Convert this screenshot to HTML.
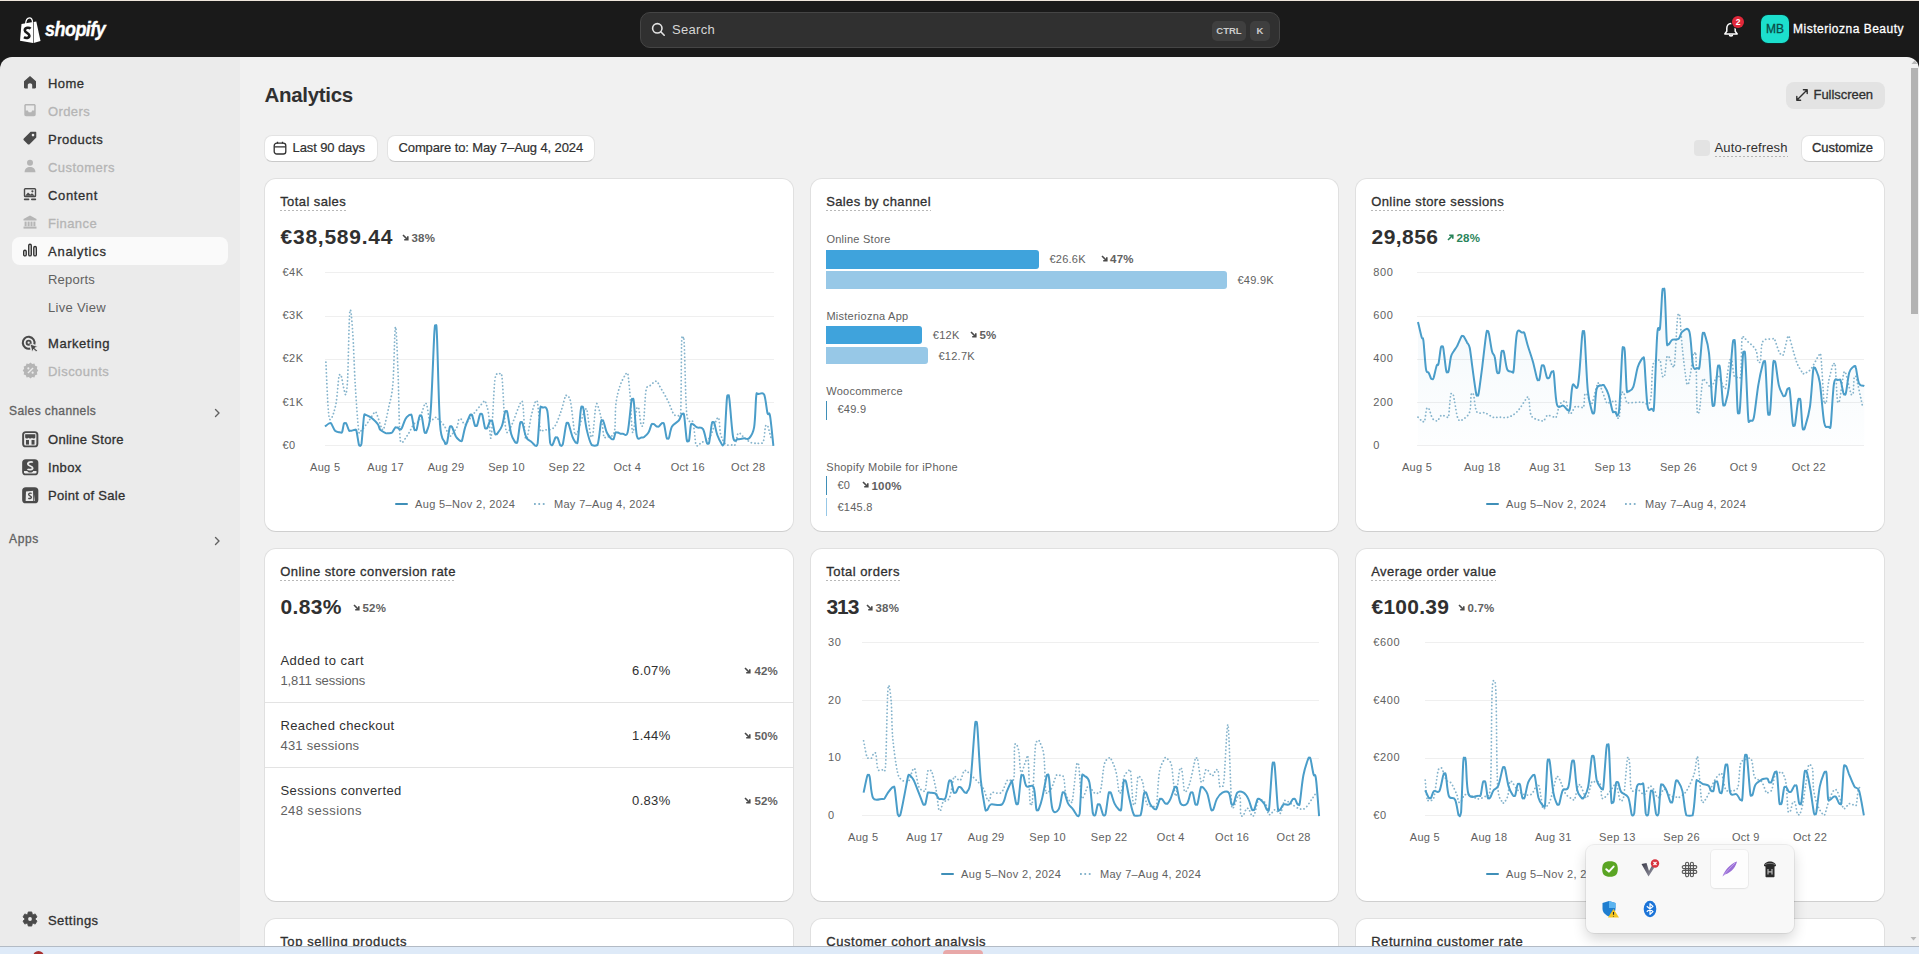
<!DOCTYPE html>
<html><head><meta charset="utf-8"><style>*{box-sizing:border-box;margin:0;padding:0}
html,body{width:1919px;height:954px;overflow:hidden;background:#1a1a1a;font-family:"Liberation Sans",sans-serif;color:#303030}
.abs{position:absolute}
.t{position:absolute;white-space:nowrap}
#top{position:absolute;left:0;top:0;width:1919px;height:57px;background:#1a1a1a;border-top:1px solid #efe6dc}
#side{position:absolute;left:0;top:57px;width:240px;height:897px;background:#ebebeb;border-top-left-radius:12px}
#main{position:absolute;left:240px;top:57px;width:1679px;height:897px;background:#f1f1f1;border-top-right-radius:12px}
.card{position:absolute;background:#fff;border-radius:12px;border:1px solid #e0e0e0;border-bottom-color:#cfcfcf}
.btn{position:absolute;background:#fff;border-radius:8px;border:1px solid #e3e3e3;border-bottom-color:#c9c9c9}
</style></head><body>
<div id="top">
<svg class="abs" style="left:19px;top:15px" width="24" height="28" viewBox="0 0 24 28">
  <path d="M2.5 8 L14 6 L14 27 L1 24.8 Z" fill="#fff"/>
  <path d="M14.6 5.9 L17.3 5.5 L21.5 25 L14.6 27 Z" fill="#fff"/>
  <path d="M6.5 8.5 C6.8 4,8.5 1.8,10.5 1.8 C12.2 1.8,13.4 3.5,13.6 6.5" stroke="#fff" stroke-width="1.3" fill="none"/>
  <path d="M11.6 12.6 C10.2 11.3,5.8 11.2,5.8 14.3 C5.8 17,10.4 16.8,10.4 19.8 C10.4 22.3,6.8 22.4,5 21.2" stroke="#1a1a1a" stroke-width="2.6" fill="none"/>
 </svg>
<div class="abs" style="left:44.5px;top:17.3px;font-size:20px;font-weight:700;font-style:italic;color:#fff;-webkit-text-stroke:0.4px #fff;letter-spacing:-0.6px;transform:scaleX(0.9);transform-origin:left;line-height:22px">shopify</div>
<div class="abs" style="left:640px;top:10.5px;width:640px;height:36px;background:#303030;border:1px solid #454545;border-radius:10px"></div>
<svg class="abs" style="left:651px;top:21px" width="15" height="15" viewBox="0 0 15 15"><circle cx="6.3" cy="6.3" r="4.7" stroke="#e3e3e3" stroke-width="1.6" fill="none"/><path d="M9.8 9.8 L13.2 13.2" stroke="#e3e3e3" stroke-width="1.6" stroke-linecap="round"/></svg>
<div class="t" style="top:22.00px;font-size:13px;font-weight:400;color:#d6d6d6;line-height:13px;letter-spacing:0.299px;left:672.00px;">Search</div>
<div class="abs" style="left:1212px;top:19.5px;width:34px;height:20px;background:#3f3f3f;border-radius:5px"></div>
<div class="t" style="top:25.16px;font-size:9.5px;font-weight:700;color:#cccccc;line-height:9.5px;left:1229.00px;transform:translateX(-50%);">CTRL</div>
<div class="abs" style="left:1250px;top:19.5px;width:20px;height:20px;background:#3f3f3f;border-radius:5px"></div>
<div class="t" style="top:25.16px;font-size:9.5px;font-weight:700;color:#cccccc;line-height:9.5px;left:1260.00px;transform:translateX(-50%);">K</div>
<svg class="abs" style="left:1723px;top:21px" width="16" height="17" viewBox="0 0 16 17"><path d="M8 1.5 C5.3 1.5,3.8 3.6,3.8 6.3 L3.8 9.2 L1.8 11.9 L14.2 11.9 L12.2 9.2 L12.2 6.3 C12.2 3.6,10.7 1.5,8 1.5 Z" stroke="#fff" stroke-width="1.5" fill="none" stroke-linejoin="round"/><path d="M6.4 12.6 C6.4 14.6,9.6 14.6,9.6 12.6" stroke="#fff" stroke-width="1.5" fill="none"/></svg>
<div class="abs" style="left:1732px;top:15px;width:12px;height:12px;border-radius:6px;background:#e0283a;box-shadow:0 0 0 1px #1a1a1a"></div>
<div class="t" style="top:17.30px;font-size:8.5px;font-weight:700;color:#fff;line-height:8.5px;left:1738.00px;transform:translateX(-50%);">2</div>
<div class="abs" style="left:1761px;top:13.8px;width:28px;height:28px;border-radius:7px;background:#1cdfcd;box-shadow:0 0 0 1px #0c2a28"></div>
<div class="t" style="top:22.14px;font-size:12px;font-weight:400;color:#0a4d47;line-height:12px;-webkit-text-stroke:0.3px #0a4d47;left:1775.00px;transform:translateX(-50%);">MB</div>
<div class="t" style="top:22.14px;font-size:12px;font-weight:400;color:#fff;line-height:12px;-webkit-text-stroke:0.3px #fff;letter-spacing:0.497px;left:1793.00px;">Misteriozna Beauty</div>
</div>
<div id="side"></div>
<div class="abs" style="left:12px;top:237px;width:216px;height:28px;background:#fafafa;border-radius:8px"></div>
<svg class="abs" style="left:22.0px;top:74.0px" width="16" height="16" viewBox="0 0 16 16"><path d="M2 7.2 L8 2 L14 7.2 L14 13.3 C14 14,13.6 14.4,13 14.4 L10.2 14.4 L10.2 11 C10.2 10,9.2 9.2,8 9.2 C6.8 9.2,5.8 10,5.8 11 L5.8 14.4 L3 14.4 C2.4 14.4,2 14,2 13.3 Z" fill="#4a4a4a"/></svg>
<div class="t" style="top:77.00px;font-size:13px;font-weight:400;color:#303030;line-height:13px;-webkit-text-stroke:0.3px #303030;letter-spacing:0.453px;left:48.00px;">Home</div>
<svg class="abs" style="left:22.0px;top:102.0px" width="16" height="16" viewBox="0 0 16 16"><path d="M2.3 3.6 C2.3 2.6,3 2,4 2 L12 2 C13 2,13.7 2.6,13.7 3.6 L13.7 12.6 C13.7 13.5,13 14.2,12 14.2 L4 14.2 C3 14.2,2.3 13.5,2.3 12.6 Z" fill="#b5b5b5"/><path d="M3.8 3.5 L12.2 3.5 L12.2 8.6 L10.2 8.6 L9.3 10.2 L6.7 10.2 L5.8 8.6 L3.8 8.6 Z" fill="#ebebeb"/></svg>
<div class="t" style="top:105.00px;font-size:13px;font-weight:400;color:#b5b5b5;line-height:13px;-webkit-text-stroke:0.3px #b5b5b5;letter-spacing:0.394px;left:48.00px;">Orders</div>
<svg class="abs" style="left:22.0px;top:130.0px" width="16" height="16" viewBox="0 0 16 16"><path d="M8.6 1.8 L13.3 1.8 C13.9 1.8,14.3 2.2,14.3 2.8 L14.3 7.5 L7.6 14.2 C7.1 14.7,6.3 14.7,5.8 14.2 L1.8 10.2 C1.3 9.7,1.3 8.9,1.8 8.4 Z" fill="#4a4a4a"/><circle cx="11" cy="5.1" r="1.3" fill="#ebebeb"/></svg>
<div class="t" style="top:133.00px;font-size:13px;font-weight:400;color:#303030;line-height:13px;-webkit-text-stroke:0.3px #303030;letter-spacing:0.498px;left:48.00px;">Products</div>
<svg class="abs" style="left:22.0px;top:158.0px" width="16" height="16" viewBox="0 0 16 16"><circle cx="8" cy="4.8" r="3" fill="#b5b5b5"/><path d="M2.6 14.2 C2.6 10.7,5 9,8 9 C11 9,13.4 10.7,13.4 14.2 Z" fill="#b5b5b5"/></svg>
<div class="t" style="top:161.00px;font-size:13px;font-weight:400;color:#b5b5b5;line-height:13px;-webkit-text-stroke:0.3px #b5b5b5;letter-spacing:0.460px;left:48.00px;">Customers</div>
<svg class="abs" style="left:22.0px;top:186.0px" width="16" height="16" viewBox="0 0 16 16"><rect x="1.8" y="2" width="12.4" height="9.2" rx="1.5" fill="#4a4a4a"/><rect x="3.2" y="3.4" width="9.6" height="6.4" fill="#ebebeb"/><path d="M3.2 9.8 L6 6.6 L8.4 8.6 L10 7.2 L12.8 9.8 Z" fill="#4a4a4a"/><circle cx="10.4" cy="5.3" r="1.1" fill="#4a4a4a"/><rect x="1.8" y="12.6" width="5.6" height="1.6" rx=".8" fill="#4a4a4a"/><rect x="9" y="12.6" width="5.2" height="1.6" rx=".8" fill="#4a4a4a"/></svg>
<div class="t" style="top:189.00px;font-size:13px;font-weight:400;color:#303030;line-height:13px;-webkit-text-stroke:0.3px #303030;letter-spacing:0.636px;left:48.00px;">Content</div>
<svg class="abs" style="left:22.0px;top:214.0px" width="16" height="16" viewBox="0 0 16 16"><path d="M8 1.5 L14.5 5 L14.5 6.6 L1.5 6.6 L1.5 5 Z" fill="#b5b5b5"/><rect x="2.6" y="7.6" width="2" height="4.6" fill="#b5b5b5"/><rect x="5.6" y="7.6" width="2" height="4.6" fill="#b5b5b5"/><rect x="8.5" y="7.6" width="2" height="4.6" fill="#b5b5b5"/><rect x="11.4" y="7.6" width="2" height="4.6" fill="#b5b5b5"/><rect x="1.5" y="12.6" width="13" height="2" fill="#b5b5b5"/></svg>
<div class="t" style="top:217.00px;font-size:13px;font-weight:400;color:#b5b5b5;line-height:13px;-webkit-text-stroke:0.3px #b5b5b5;letter-spacing:0.393px;left:48.00px;">Finance</div>
<svg class="abs" style="left:22.0px;top:242.0px" width="16" height="16" viewBox="0 0 16 16"><rect x="1.7" y="8.3" width="2.5" height="5.6" rx="1.25" stroke="#303030" stroke-width="1.4" fill="none"/><rect x="6.75" y="2.3" width="2.5" height="11.6" rx="1.25" stroke="#303030" stroke-width="1.4" fill="none"/><rect x="11.8" y="4.5" width="2.5" height="9.4" rx="1.25" stroke="#303030" stroke-width="1.4" fill="none"/></svg>
<div class="t" style="top:245.00px;font-size:13px;font-weight:400;color:#303030;line-height:13px;-webkit-text-stroke:0.3px #303030;letter-spacing:0.741px;left:48.00px;">Analytics</div>
<div class="t" style="top:273.00px;font-size:13px;font-weight:400;color:#616161;line-height:13px;letter-spacing:0.210px;left:48.00px;">Reports</div>
<div class="t" style="top:301.00px;font-size:13px;font-weight:400;color:#616161;line-height:13px;letter-spacing:0.288px;left:48.00px;">Live View</div>
<svg class="abs" style="left:21.2px;top:334.8px" width="17.5" height="17.5" viewBox="0 0 16 16"><path d="M12.2 8.6 A5.4 5.4 0 1 0 8.4 12.3" stroke="#4a4a4a" stroke-width="1.9" fill="none"/><circle cx="7" cy="7" r="1.9" stroke="#4a4a4a" stroke-width="1.7" fill="none"/><path d="M8.3 8.3 L15.3 10.6 L12.6 11.9 L15 14.3 L13.9 15.4 L11.5 13 L10.2 15.6 Z" fill="#4a4a4a" stroke="#ebebeb" stroke-width=".7" stroke-linejoin="round"/></svg>
<div class="t" style="top:337.00px;font-size:13px;font-weight:400;color:#303030;line-height:13px;-webkit-text-stroke:0.3px #303030;letter-spacing:0.547px;left:48.00px;">Marketing</div>
<svg class="abs" style="left:21.5px;top:361.5px" width="17" height="17" viewBox="0 0 16 16"><path d="M8 1 L9.6 2.4 L11.7 2 L12.4 4 L14.4 4.8 L14 6.9 L15.3 8.5 L14 10.1 L14.4 12.2 L12.4 13 L11.7 15 L9.6 14.6 L8 16 L6.4 14.6 L4.3 15 L3.6 13 L1.6 12.2 L2 10.1 L0.7 8.5 L2 6.9 L1.6 4.8 L3.6 4 L4.3 2 L6.4 2.4 Z" fill="#b5b5b5" transform="translate(0,-0.5)"/><path d="M5.6 10.4 L10.4 5.6" stroke="#ebebeb" stroke-width="1.3"/><circle cx="6" cy="6" r="1" fill="#ebebeb"/><circle cx="10" cy="10" r="1" fill="#ebebeb"/></svg>
<div class="t" style="top:365.00px;font-size:13px;font-weight:400;color:#b5b5b5;line-height:13px;-webkit-text-stroke:0.3px #b5b5b5;letter-spacing:0.458px;left:48.00px;">Discounts</div>
<div class="t" style="top:404.84px;font-size:12px;font-weight:400;color:#616161;line-height:12px;-webkit-text-stroke:0.3px #616161;letter-spacing:0.415px;left:9.00px;">Sales channels</div>
<svg class="abs" style="left:212px;top:407px" width="10" height="12" viewBox="0 0 10 12"><path d="M3.5 2.5 L7 6 L3.5 9.5" stroke="#616161" stroke-width="1.4" fill="none" stroke-linecap="round" stroke-linejoin="round"/></svg>
<svg class="abs" style="left:20.8px;top:429.8px" width="18.5" height="18.5" viewBox="0 0 16 16"><rect x="1" y="1" width="14" height="14" rx="3.2" fill="#4a4a4a"/><rect x="2.7" y="2.7" width="10.6" height="10.6" rx="1.3" fill="#ebebeb"/><path d="M3.6 3.6 L12.4 3.6 L12.4 6.2 C12.4 7,11.6 7.4,11 7.4 C10.3 7.4,9.5 7,9.5 6.4 C9.5 7,8.7 7.4,8 7.4 C7.3 7.4,6.5 7,6.5 6.4 C6.5 7,5.7 7.4,5 7.4 C4.3 7.4,3.6 7,3.6 6.2 Z" fill="#4a4a4a"/><rect x="4.3" y="8.6" width="2.6" height="4" fill="#4a4a4a"/><rect x="9.1" y="8.6" width="2.6" height="4" fill="#4a4a4a"/></svg>
<div class="t" style="top:433.00px;font-size:13px;font-weight:400;color:#303030;line-height:13px;-webkit-text-stroke:0.3px #303030;letter-spacing:0.295px;left:48.00px;">Online Store</div>
<svg class="abs" style="left:20.8px;top:457.8px" width="18.5" height="18.5" viewBox="0 0 16 16"><rect x="1" y="1" width="14" height="14" rx="3.2" fill="#4a4a4a"/><path d="M10.2 3.9 C9.4 3.1,5.9 3.2,5.9 5.2 C5.9 7,10.1 6.8,10.1 8.6 C10.1 10.3,6.6 10.4,5.6 9.6" stroke="#ebebeb" stroke-width="1.5" fill="none"/><path d="M2.6 11.2 L5.5 11.2 C5.8 12.2,6.8 12.6,8 12.6 C9.2 12.6,10.2 12.2,10.5 11.2 L13.4 11.2 L13.4 12.6 C13.4 13.1,13 13.4,12.5 13.4 L3.5 13.4 C3,13.4 2.6 13.1,2.6 12.6 Z" fill="#ebebeb"/></svg>
<div class="t" style="top:461.00px;font-size:13px;font-weight:400;color:#303030;line-height:13px;-webkit-text-stroke:0.3px #303030;letter-spacing:0.358px;left:48.00px;">Inbox</div>
<svg class="abs" style="left:20.8px;top:485.8px" width="18.5" height="18.5" viewBox="0 0 16 16"><rect x="1" y="1" width="14" height="14" rx="3.2" fill="#4a4a4a"/><path d="M4.3 4.8 L10.8 4 L12 13 L4 13 Z" fill="#ebebeb"/><path d="M9.2 6.5 C8.6 5.9,6.6 6,6.6 7.3 C6.6 8.6,9 8.4,9 9.8 C9 11,7.1 11.1,6.4 10.5" stroke="#4a4a4a" stroke-width="1.2" fill="none"/><path d="M10.8 4 L11 13" stroke="#4a4a4a" stroke-width="0.8"/></svg>
<div class="t" style="top:489.00px;font-size:13px;font-weight:400;color:#303030;line-height:13px;-webkit-text-stroke:0.3px #303030;letter-spacing:0.291px;left:48.00px;">Point of Sale</div>
<div class="t" style="top:532.84px;font-size:12px;font-weight:400;color:#616161;line-height:12px;-webkit-text-stroke:0.3px #616161;letter-spacing:0.635px;left:9.00px;">Apps</div>
<svg class="abs" style="left:212px;top:535px" width="10" height="12" viewBox="0 0 10 12"><path d="M3.5 2.5 L7 6 L3.5 9.5" stroke="#616161" stroke-width="1.4" fill="none" stroke-linecap="round" stroke-linejoin="round"/></svg>
<svg class="abs" style="left:22.0px;top:911.0px" width="16" height="16" viewBox="0 0 16 16"><path d="M5.80 3.07 L6.23 0.92 L9.77 0.92 L10.20 3.07 L11.17 3.63 L13.25 2.93 L15.02 5.99 L13.37 7.44 L13.37 8.56 L15.02 10.01 L13.25 13.07 L11.17 12.37 L10.20 12.93 L9.77 15.08 L6.23 15.08 L5.80 12.93 L4.83 12.37 L2.75 13.07 L0.98 10.01 L2.63 8.56 L2.63 7.44 L0.98 5.99 L2.75 2.93 L4.83 3.63 Z" fill="#4a4a4a" stroke="#4a4a4a" stroke-width="0.8" stroke-linejoin="round"/><circle cx="8" cy="8" r="1.9" fill="#ebebeb"/></svg>
<div class="t" style="top:914.00px;font-size:13px;font-weight:400;color:#303030;line-height:13px;-webkit-text-stroke:0.3px #303030;letter-spacing:0.439px;left:48.00px;">Settings</div>
<div id="main"></div>
<div class="t" style="top:84.85px;font-size:20.5px;font-weight:700;color:#303030;line-height:20.5px;letter-spacing:-0.317px;left:264.50px;">Analytics</div>
<div class="abs" style="left:1786px;top:81.5px;width:98.5px;height:27px;background:#e3e3e3;border-radius:8px"></div>
<svg class="abs" style="left:1795px;top:88px" width="14" height="14" viewBox="0 0 14 14"><path d="M8.4 1.8 L12.2 1.8 L12.2 5.6 M12 2 L2 12 M5.6 12.2 L1.8 12.2 L1.8 8.4" stroke="#303030" stroke-width="1.4" fill="none" stroke-linecap="round" stroke-linejoin="round"/></svg>
<div class="t" style="top:88.20px;font-size:13px;font-weight:400;color:#303030;line-height:13px;-webkit-text-stroke:0.3px #303030;letter-spacing:-0.047px;left:1813.50px;">Fullscreen</div>
<div class="btn" style="left:264px;top:134.5px;width:113.5px;height:27.5px"></div>
<svg class="abs" style="left:272.5px;top:140.5px" width="14" height="14" viewBox="0 0 14 14"><rect x="1.2" y="2.2" width="11.6" height="10.8" rx="2.6" stroke="#303030" stroke-width="1.3" fill="none"/><path d="M1.5 5.8 L12.5 5.8 M4.5 0.8 L4.5 2.6 M9.5 0.8 L9.5 2.6" stroke="#303030" stroke-width="1.3"/></svg>
<div class="t" style="top:141.00px;font-size:13px;font-weight:400;color:#303030;line-height:13px;letter-spacing:-0.102px;left:292.50px;-webkit-text-stroke:0.2px #303030;">Last 90 days</div>
<div class="btn" style="left:386.5px;top:134.5px;width:208px;height:27.5px"></div>
<div class="t" style="top:141.00px;font-size:13px;font-weight:400;color:#303030;line-height:13px;letter-spacing:-0.117px;left:398.50px;-webkit-text-stroke:0.2px #303030;">Compare to: May 7–Aug 4, 2024</div>
<div class="abs" style="left:1694px;top:140px;width:16px;height:16px;background:#e3e3e3;border-radius:4px"></div>
<div class="t" style="top:141.00px;font-size:13px;font-weight:400;color:#303030;line-height:13px;letter-spacing:0.121px;left:1714.50px;">Auto-refresh</div>
<div class="abs" style="left:1714.5px;top:155.5px;width:73px;height:1.5px;background-image:linear-gradient(to right,#b5b5b5 50%,transparent 50%);background-size:4px 1.5px"></div>
<div class="btn" style="left:1800.5px;top:134.5px;width:84.5px;height:27.5px"></div>
<div class="t" style="top:141.30px;font-size:13px;font-weight:400;color:#303030;line-height:13px;-webkit-text-stroke:0.3px #303030;letter-spacing:-0.047px;left:1812.00px;">Customize</div>
<div class="card" style="left:264px;top:178px;width:530px;height:354px"></div>
<div class="t" style="top:195.00px;font-size:13px;font-weight:400;color:#303030;line-height:13px;-webkit-text-stroke:0.3px #303030;letter-spacing:0.416px;left:280.20px;">Total sales</div>
<div class="abs" style="left:280.0px;top:209.5px;width:66px;height:1.5px;background-image:linear-gradient(to right,#b8b8b8 40%,transparent 40%);background-size:4px 1.5px"></div>
<div class="t" style="top:226.42px;font-size:21px;font-weight:700;color:#303030;line-height:21px;letter-spacing:0.759px;left:280.50px;">€38,589.44</div>
<svg class="abs" style="left:402.0px;top:233.7px" width="7" height="7" viewBox="0 0 7 7"><path d="M1 1 L5.6 5.6 M5.8 2.2 L5.8 5.8 L2.2 5.8" stroke="#4a4a4a" stroke-width="1.6" fill="none"/></svg>
<div class="t" style="top:233.17px;font-size:11.5px;font-weight:700;color:#616161;line-height:11.5px;letter-spacing:0.200px;left:411.50px;">38%</div>
<div class="abs" style="left:325.0px;top:272.0px;width:449.0px;height:1px;background:#efefef"></div>
<div class="t" style="top:266.59px;font-size:11px;font-weight:400;color:#616161;line-height:11px;letter-spacing:0.600px;left:282.40px;">€4K</div>
<div class="abs" style="left:325.0px;top:315.5px;width:449.0px;height:1px;background:#efefef"></div>
<div class="t" style="top:310.09px;font-size:11px;font-weight:400;color:#616161;line-height:11px;letter-spacing:0.600px;left:282.40px;">€3K</div>
<div class="abs" style="left:325.0px;top:358.8px;width:449.0px;height:1px;background:#efefef"></div>
<div class="t" style="top:353.39px;font-size:11px;font-weight:400;color:#616161;line-height:11px;letter-spacing:0.600px;left:282.40px;">€2K</div>
<div class="abs" style="left:325.0px;top:402.1px;width:449.0px;height:1px;background:#efefef"></div>
<div class="t" style="top:396.69px;font-size:11px;font-weight:400;color:#616161;line-height:11px;letter-spacing:0.600px;left:282.40px;">€1K</div>
<div class="abs" style="left:325.0px;top:445.3px;width:449.0px;height:1px;background:#efefef"></div>
<div class="t" style="top:439.89px;font-size:11px;font-weight:400;color:#616161;line-height:11px;letter-spacing:0.600px;left:282.40px;">€0</div>
<div class="t" style="top:461.69px;font-size:11px;font-weight:400;color:#616161;line-height:11px;letter-spacing:0.300px;left:325.20px;transform:translateX(-50%);">Aug 5</div>
<div class="t" style="top:461.69px;font-size:11px;font-weight:400;color:#616161;line-height:11px;letter-spacing:0.300px;left:385.63px;transform:translateX(-50%);">Aug 17</div>
<div class="t" style="top:461.69px;font-size:11px;font-weight:400;color:#616161;line-height:11px;letter-spacing:0.300px;left:446.06px;transform:translateX(-50%);">Aug 29</div>
<div class="t" style="top:461.69px;font-size:11px;font-weight:400;color:#616161;line-height:11px;letter-spacing:0.300px;left:506.50px;transform:translateX(-50%);">Sep 10</div>
<div class="t" style="top:461.69px;font-size:11px;font-weight:400;color:#616161;line-height:11px;letter-spacing:0.300px;left:566.93px;transform:translateX(-50%);">Sep 22</div>
<div class="t" style="top:461.69px;font-size:11px;font-weight:400;color:#616161;line-height:11px;letter-spacing:0.300px;left:627.36px;transform:translateX(-50%);">Oct 4</div>
<div class="t" style="top:461.69px;font-size:11px;font-weight:400;color:#616161;line-height:11px;letter-spacing:0.300px;left:687.79px;transform:translateX(-50%);">Oct 16</div>
<div class="t" style="top:461.69px;font-size:11px;font-weight:400;color:#616161;line-height:11px;letter-spacing:0.300px;left:748.22px;transform:translateX(-50%);">Oct 28</div>
<svg class="abs" style="left:0;top:0" width="1919" height="954" viewBox="0 0 1919 954"><path d="M325.9 362.1 C326.3 370.2 327.5 401.2 328.4 410.7 C329.2 420.2 329.6 420.2 330.9 419.0 C332.2 417.9 334.6 410.9 335.9 404.0 C337.2 397.0 338.1 382.2 338.8 377.5 C339.5 372.7 339.7 375.6 340.1 375.5 C340.5 375.3 340.7 374.0 341.4 376.5 C342.1 379.0 343.5 387.7 344.3 390.6 C345.1 393.4 345.4 396.1 346.0 393.9 C346.5 391.7 347.0 390.8 347.7 377.1 C348.3 363.5 349.0 319.3 349.8 311.8 C350.7 304.2 351.8 319.9 352.7 331.9 C353.6 343.9 354.2 367.6 355.2 383.8 C356.2 400.0 357.6 421.3 358.5 429.1 C359.5 436.9 359.5 431.9 361.1 430.8 C362.6 429.7 365.6 425.3 367.8 422.4 C369.9 419.4 372.7 414.7 374.0 413.0 C375.3 411.4 374.9 412.3 375.3 412.3 C375.7 412.4 375.6 410.9 376.6 413.5 C377.6 416.1 380.5 425.3 381.5 427.9 C382.6 430.5 382.4 429.2 382.8 429.1 C383.3 429.0 383.2 431.2 384.1 427.6 C385.1 423.9 387.3 414.6 388.7 407.3 C390.2 400.0 391.8 397.3 392.9 383.8 C394.0 370.4 394.6 329.4 395.4 326.9 C396.3 324.4 397.1 349.8 397.9 368.8 C398.8 387.8 398.9 429.7 400.4 440.8 C402.0 445.8 404.9 438.6 407.1 435.8 C409.4 433.0 411.9 426.6 413.8 424.1 C415.8 421.6 417.1 423.9 418.9 420.7 C420.6 417.6 423.2 407.9 424.3 405.1 C425.4 402.3 425.1 404.0 425.6 404.0 C426.0 404.0 426.3 402.5 426.9 405.1 C427.5 407.7 428.7 416.9 429.3 419.5 C429.9 422.1 430.2 420.6 430.6 420.7 C431.0 420.9 431.3 421.0 431.9 420.5 C432.5 420.0 433.7 418.1 434.3 417.6 C435.0 417.1 435.2 417.3 435.6 417.4 C436.1 417.4 435.5 416.6 436.9 418.0 C438.4 419.4 442.2 422.9 444.2 425.7 C446.2 428.6 447.8 433.4 448.8 435.1 C449.7 436.8 449.6 435.8 450.1 435.8 C450.5 435.8 450.2 436.6 451.4 435.2 C452.5 433.8 455.5 430.0 456.8 427.4 C458.0 424.8 458.3 421.0 458.8 419.6 C459.4 418.2 459.7 419.1 460.1 419.0 C460.5 419.0 460.8 418.6 461.4 419.4 C462.0 420.2 463.2 422.9 463.8 423.7 C464.5 424.5 464.7 424.1 465.1 424.1 C465.6 424.0 465.0 425.0 466.4 423.4 C467.8 421.7 470.7 417.5 473.5 414.0 C476.3 410.5 481.3 404.4 483.1 402.3 C484.9 400.2 484.0 401.4 484.4 401.4 C484.8 401.4 485.0 400.2 485.7 402.3 C486.4 404.4 487.7 408.2 488.6 414.0 C489.5 419.9 490.1 442.5 491.1 437.5 C492.1 432.5 493.6 394.3 494.5 383.8 C495.4 373.4 496.0 376.2 496.5 374.5 C497.1 372.8 497.4 373.9 497.8 373.8 C498.3 373.7 498.4 373.5 499.1 374.0 C499.8 374.6 501.1 369.9 502.0 377.1 C502.9 384.4 503.7 408.1 504.5 417.4 C505.4 426.6 505.8 431.3 507.0 432.5 C508.3 433.6 509.8 429.0 512.1 424.1 C514.3 419.2 518.6 406.2 520.4 403.1 C522.3 400.0 522.2 400.3 523.0 405.6 C523.7 411.0 524.4 429.9 525.0 435.2 C525.6 440.6 525.9 437.4 526.3 437.5 C526.7 437.6 526.8 439.6 527.6 436.0 C528.4 432.3 530.1 421.3 531.3 415.7 C532.6 410.1 534.2 404.8 535.1 402.4 C535.9 400.1 535.9 401.3 536.4 401.4 C536.8 401.6 537.0 399.0 537.7 403.5 C538.3 408.0 539.5 424.2 540.1 428.7 C540.7 433.3 541.0 430.4 541.4 430.8 C541.8 431.1 542.0 430.9 542.7 430.7 C543.4 430.6 543.7 430.5 545.6 429.9 C547.5 429.4 551.4 430.4 554.0 427.4 C556.5 424.5 558.8 417.5 560.7 412.3 C562.5 407.2 564.3 399.5 565.2 396.8 C566.2 394.0 566.1 395.7 566.5 395.6 C567.0 395.5 567.1 394.9 567.8 396.0 C568.5 397.2 569.6 396.3 570.7 402.3 C571.8 408.3 573.6 426.6 574.4 431.9 C575.3 437.2 575.3 433.8 575.7 434.1 C576.2 434.4 576.5 434.8 577.0 433.7 C577.6 432.5 577.9 431.3 579.1 427.4 C580.3 423.5 583.4 413.4 584.5 410.3 C585.6 407.2 585.4 408.9 585.8 409.0 C586.2 409.1 586.3 406.7 587.1 410.9 C587.9 415.0 589.6 429.8 590.4 433.9 C591.1 438.1 591.2 435.8 591.7 435.8 C592.1 435.8 592.3 438.7 593.0 433.7 C593.7 428.7 595.0 410.0 595.9 405.6 C596.8 401.2 597.4 404.8 598.4 407.3 C599.3 409.8 600.8 415.9 601.7 420.7 C602.6 425.6 603.2 433.5 603.8 436.3 C604.3 439.1 604.6 437.3 605.1 437.5 C605.5 437.6 604.9 438.0 606.4 437.1 C607.9 436.3 612.6 438.0 614.2 432.5 C615.8 426.9 614.9 411.8 615.9 404.0 C616.8 396.1 618.5 390.4 620.1 385.5 C621.7 380.6 624.3 376.6 625.5 374.6 C626.6 372.7 626.3 373.7 626.8 373.8 C627.2 373.9 627.5 371.7 628.1 375.3 C628.6 379.0 629.3 386.1 630.1 395.6 C630.9 405.1 631.6 430.1 632.6 432.5 C633.7 434.8 635.5 413.9 636.4 409.9 C637.2 405.8 637.2 408.2 637.7 408.1 C638.1 408.1 638.4 406.6 639.0 409.3 C639.5 411.9 640.2 421.9 641.0 424.1 C641.8 426.3 642.7 428.0 643.5 422.4 C644.4 416.8 644.9 396.7 646.0 390.6 C647.1 384.4 648.8 387.0 650.2 385.5 C651.7 384.0 653.8 382.3 654.8 381.6 C655.8 380.9 655.7 381.3 656.1 381.3 C656.5 381.4 656.7 380.8 657.4 381.7 C658.1 382.7 658.5 384.1 660.3 387.2 C662.0 390.3 665.6 396.1 667.8 400.6 C670.1 405.1 671.9 411.5 673.7 414.0 C675.4 416.5 677.3 415.3 678.2 415.6 C679.2 415.9 679.1 416.6 679.5 415.7 C680.0 414.8 680.5 422.2 680.8 410.3 C681.2 398.3 681.3 355.9 681.6 344.0 C681.9 332.0 682.5 338.7 682.9 338.6 C683.3 338.5 683.6 332.0 684.2 343.4 C684.8 354.9 685.5 394.4 686.3 407.3 C687.0 420.2 687.6 418.2 688.8 420.7 C689.9 423.2 691.8 418.5 693.0 422.4 C694.1 426.3 695.1 440.3 695.8 444.2 C696.5 445.8 696.7 445.6 697.1 445.9 C697.6 445.8 697.7 445.8 698.4 445.6 C699.1 445.1 700.0 443.3 701.3 442.5 C702.7 441.7 704.8 441.9 706.4 440.8 C707.9 439.7 708.6 439.7 710.6 435.8 C712.5 431.9 716.4 417.6 718.1 417.4 C719.8 417.1 719.4 429.7 720.6 434.1 C721.9 438.6 723.6 442.4 725.6 444.2 C727.7 445.8 731.3 444.8 732.7 445.0 C734.1 445.1 733.6 445.1 734.0 445.0 C734.4 444.9 734.7 445.8 735.3 444.2 C735.9 442.4 737.1 435.9 737.7 434.1 C738.4 432.3 738.6 433.4 739.0 433.3 C739.5 433.2 739.5 432.9 740.3 433.6 C741.2 434.3 742.3 436.0 744.1 437.5 C745.8 439.0 748.8 441.5 750.8 442.5 C752.8 443.5 755.1 443.1 756.2 443.3 C757.3 443.4 757.0 443.4 757.5 443.3 C757.9 443.3 757.8 443.5 758.8 443.2 C759.8 442.9 762.2 444.4 763.3 441.7 C764.4 438.9 764.8 429.5 765.4 426.9 C766.0 424.2 766.3 425.8 766.7 425.7 C767.1 425.7 767.3 424.6 768.0 426.6 C768.7 428.5 770.4 435.7 770.9 437.5" stroke="#86b4cc" stroke-width="1.8" fill="none" stroke-dasharray="0.1 3.5" stroke-linecap="round"/><path d="M325.0 426.6 C325.6 426.1 327.9 424.0 328.8 423.5 C329.6 422.9 329.6 423.2 330.1 423.2 C330.5 423.3 330.5 422.5 331.4 423.8 C332.2 425.0 333.7 429.3 335.1 430.8 C336.5 432.2 338.7 432.1 339.6 432.3 C340.6 432.6 340.5 432.5 340.9 432.5 C341.4 432.4 341.8 433.2 342.2 431.8 C342.7 430.4 343.4 425.3 343.8 423.9 C344.3 422.4 344.7 423.3 345.1 423.2 C345.6 423.2 345.8 422.6 346.4 423.8 C347.1 424.9 348.2 429.1 348.9 430.2 C349.5 431.4 349.7 430.7 350.2 430.8 C350.6 430.9 350.8 430.8 351.5 430.7 C352.1 430.6 353.3 430.1 353.9 430.0 C354.5 429.9 354.8 429.8 355.2 429.9 C355.6 430.1 355.9 428.6 356.5 431.1 C357.1 433.5 358.3 442.3 358.9 444.7 C359.5 445.8 359.8 445.8 360.2 445.9 C360.7 445.7 360.9 445.8 361.5 443.7 C362.1 438.9 363.3 421.8 363.9 417.0 C364.6 412.2 364.8 415.2 365.2 414.9 C365.7 414.5 365.4 414.5 366.5 415.1 C367.7 415.6 370.1 416.7 372.0 418.2 C373.8 419.7 376.4 422.1 377.8 424.1 C379.2 426.0 379.0 428.4 380.3 429.9 C381.7 431.4 384.6 432.5 385.7 433.1 C386.9 433.6 386.6 433.3 387.0 433.3 C387.5 433.3 387.5 433.4 388.3 433.2 C389.2 433.1 391.0 433.4 392.1 432.5 C393.2 431.5 394.3 428.6 395.0 427.8 C395.7 426.9 395.8 427.5 396.3 427.4 C396.7 427.4 397.1 427.3 397.6 427.5 C398.0 427.8 398.7 428.7 399.1 429.0 C399.6 429.2 400.0 429.2 400.4 429.1 C400.9 429.0 400.9 430.1 401.7 428.4 C402.6 426.7 404.2 421.3 405.5 419.0 C406.7 416.8 408.4 415.8 409.2 415.1 C410.0 414.4 410.1 414.7 410.5 414.9 C410.9 415.0 411.2 413.6 411.8 415.9 C412.4 418.2 413.6 426.5 414.2 428.9 C414.8 431.2 415.1 429.9 415.5 429.9 C416.0 429.9 416.2 431.1 416.8 428.9 C417.4 426.7 418.6 418.9 419.3 416.7 C419.9 414.5 420.1 415.7 420.6 415.7 C421.0 415.7 421.2 414.3 421.9 416.9 C422.5 419.5 423.7 428.7 424.3 431.3 C424.9 433.9 425.1 432.5 425.6 432.5 C426.0 432.4 426.0 434.4 426.9 431.0 C427.7 427.7 429.4 428.6 430.6 412.3 C431.9 396.1 433.5 347.7 434.3 333.6 C435.2 319.5 435.2 327.6 435.6 327.7 C436.1 327.8 436.2 318.4 436.9 334.5 C437.7 350.5 438.7 406.1 440.0 424.1 C441.3 442.0 443.6 438.8 444.6 442.0 C445.5 445.2 445.4 443.3 445.9 443.3 C446.3 443.4 446.5 444.8 447.2 442.2 C447.8 439.6 449.0 430.4 449.6 427.8 C450.2 425.2 450.5 426.7 450.9 426.6 C451.3 426.5 451.4 425.6 452.2 427.3 C453.0 429.0 454.7 434.4 455.9 436.6 C457.2 438.8 458.8 439.8 459.6 440.5 C460.5 441.2 460.5 440.9 460.9 440.8 C461.4 440.7 461.6 442.1 462.2 439.9 C462.9 437.7 463.9 431.4 465.1 427.4 C466.4 423.4 468.7 417.8 469.7 415.7 C470.7 413.6 470.6 414.9 471.0 414.9 C471.4 414.8 471.7 413.9 472.3 415.6 C472.9 417.3 474.1 423.3 474.7 425.0 C475.4 426.7 475.6 425.8 476.0 425.7 C476.5 425.7 476.7 426.7 477.3 424.9 C478.0 423.1 479.1 416.7 479.8 414.8 C480.4 413.0 480.6 414.0 481.1 414.0 C481.5 414.0 481.7 412.8 482.4 415.0 C483.0 417.2 484.2 425.1 484.8 427.3 C485.4 429.5 485.7 428.2 486.1 428.3 C486.5 428.3 486.8 428.9 487.4 427.7 C488.0 426.6 489.2 422.4 489.8 421.2 C490.4 420.1 490.7 420.7 491.1 420.7 C491.5 420.8 491.8 419.6 492.4 421.7 C493.0 423.7 494.2 431.1 494.8 433.2 C495.5 435.3 495.7 434.1 496.1 434.1 C496.6 434.2 496.5 434.9 497.4 433.5 C498.4 432.1 500.8 429.3 502.0 425.7 C503.3 422.2 504.2 414.9 504.9 412.5 C505.6 410.1 505.8 411.4 506.2 411.5 C506.6 411.6 506.7 409.3 507.5 413.1 C508.3 416.9 510.0 429.3 511.2 434.1 C512.5 438.9 514.1 440.5 515.0 441.9 C515.8 443.3 515.8 442.6 516.3 442.5 C516.7 442.4 516.9 444.2 517.6 441.1 C518.2 438.0 519.4 426.9 520.0 423.8 C520.6 420.7 520.8 422.5 521.3 422.4 C521.7 422.3 521.7 420.9 522.6 423.5 C523.4 426.0 524.8 434.4 526.3 437.5 C527.8 440.5 529.9 440.3 531.3 441.7 C532.8 443.0 534.2 444.9 535.1 445.6 C535.9 445.8 535.9 445.8 536.4 445.9 C536.8 445.5 537.0 445.8 537.7 443.2 C538.3 437.2 539.5 416.0 540.1 410.0 C540.7 404.0 541.0 407.7 541.4 407.3 C541.8 406.9 541.7 407.0 542.7 407.5 C543.7 408.1 546.0 404.8 547.3 410.7 C548.5 416.5 549.4 436.9 550.1 442.6 C550.8 445.8 551.0 444.7 551.4 445.0 C551.9 445.3 552.1 445.7 552.7 444.5 C553.4 443.3 554.6 439.2 555.2 438.0 C555.8 436.8 556.0 437.5 556.5 437.5 C556.9 437.5 557.2 436.8 557.8 438.1 C558.4 439.4 559.6 444.0 560.2 445.3 C560.8 445.8 561.1 445.8 561.5 445.9 C561.9 445.7 562.0 445.8 562.8 444.3 C563.6 440.8 565.3 428.3 566.1 424.8 C566.8 421.3 566.9 423.3 567.4 423.2 C567.8 423.1 567.8 421.9 568.7 424.2 C569.5 426.4 571.3 433.7 572.4 436.6 C573.5 439.6 574.6 441.1 575.3 442.1 C576.0 443.1 576.2 442.8 576.6 442.5 C577.0 442.2 577.2 445.5 577.9 440.0 C578.6 434.6 580.1 415.2 580.8 409.8 C581.5 404.3 581.7 407.5 582.1 407.3 C582.5 407.2 582.7 405.2 583.4 408.8 C584.2 412.5 585.3 423.1 586.6 429.1 C588.0 435.1 589.9 442.4 591.7 445.0 C593.5 445.8 596.0 445.8 597.5 445.0 C599.1 441.3 600.1 426.5 600.9 422.4 C601.7 418.4 601.8 420.9 602.2 420.7 C602.7 420.6 602.8 419.6 603.5 421.5 C604.3 423.5 605.5 429.6 606.8 432.5 C608.0 435.3 610.3 437.6 611.2 438.7 C612.2 439.8 612.1 439.2 612.5 439.2 C612.9 439.2 613.3 439.7 613.8 438.7 C614.3 437.6 614.9 434.0 615.4 432.9 C615.9 431.9 616.3 432.5 616.7 432.5 C617.1 432.4 617.4 432.3 618.0 432.5 C618.6 432.8 619.8 433.5 620.4 433.7 C621.1 433.9 621.3 433.8 621.7 433.8 C622.2 433.8 622.1 433.9 623.0 433.7 C624.0 433.5 626.2 437.7 627.6 432.5 C629.0 427.2 630.5 407.5 631.3 402.1 C632.2 396.6 632.2 399.7 632.6 399.8 C633.1 399.8 633.2 396.3 633.9 402.3 C634.6 408.3 635.6 430.0 636.8 435.8 C638.1 441.6 640.4 437.1 641.4 437.4 C642.4 437.6 642.2 437.5 642.7 437.5 C643.1 437.4 643.0 438.0 644.0 437.1 C645.0 436.3 647.3 434.5 648.5 432.5 C649.8 430.4 650.7 426.1 651.4 424.7 C652.1 423.3 652.3 424.1 652.7 424.1 C653.2 424.0 653.4 423.9 654.0 424.2 C654.7 424.6 655.8 426.0 656.5 426.4 C657.1 426.8 657.3 426.6 657.8 426.6 C658.2 426.6 658.4 426.9 659.1 426.3 C659.7 425.8 660.9 424.0 661.5 423.5 C662.1 422.9 662.4 423.1 662.8 423.2 C663.2 423.4 663.5 422.0 664.1 424.3 C664.7 426.6 665.9 434.9 666.5 437.3 C667.1 439.6 667.4 438.3 667.8 438.3 C668.3 438.4 668.4 439.4 669.1 437.5 C669.8 435.5 670.4 429.4 672.0 426.6 C673.6 423.8 677.1 422.7 678.7 420.7 C680.3 418.7 680.9 415.6 681.6 414.5 C682.3 413.4 682.5 413.8 682.9 414.0 C683.3 414.3 683.6 411.7 684.2 415.9 C684.8 420.0 686.0 434.8 686.6 439.0 C687.2 443.1 687.5 440.7 687.9 440.8 C688.4 440.9 688.7 442.3 689.2 439.7 C689.7 437.1 690.3 427.8 690.8 425.2 C691.3 422.6 691.7 424.2 692.1 424.1 C692.6 423.9 692.6 423.7 693.4 424.3 C694.3 424.9 695.5 426.6 697.1 427.4 C698.7 428.2 701.4 426.6 703.0 429.1 C704.6 431.6 705.9 440.0 706.7 442.3 C707.6 444.7 707.6 443.4 708.0 443.3 C708.5 443.3 708.7 445.1 709.3 441.9 C710.0 438.6 711.1 427.1 711.8 423.9 C712.4 420.6 712.6 422.5 713.1 422.4 C713.5 422.3 713.7 421.2 714.4 423.3 C715.1 425.4 716.0 431.5 717.3 435.0 C718.5 438.5 720.8 442.6 721.8 444.3 C722.8 445.8 722.7 445.5 723.1 445.0 C723.6 444.6 723.8 445.8 724.4 441.6 C725.0 434.1 726.2 407.4 726.8 399.8 C727.5 392.3 727.7 396.5 728.1 396.4 C728.6 396.3 728.6 392.4 729.4 399.3 C730.3 406.1 731.8 430.9 733.2 437.5 C734.6 444.1 736.8 438.8 737.7 439.0 C738.7 439.3 738.6 439.1 739.0 439.2 C739.5 439.2 739.5 439.2 740.3 439.1 C741.2 439.0 742.6 438.4 744.1 438.3 C745.5 438.2 747.4 440.1 749.1 438.3 C750.8 436.5 752.9 434.4 754.1 427.4 C755.3 420.4 755.6 401.8 756.2 396.3 C756.7 390.7 757.0 394.3 757.5 393.9 C757.9 393.5 757.7 393.8 758.8 394.0 C759.9 394.1 762.7 391.5 764.2 394.7 C765.6 397.9 766.6 409.7 767.5 413.2 C768.5 416.7 769.1 410.2 770.0 415.7 C771.0 421.1 772.8 440.8 773.4 445.9" stroke="#4a9dc9" stroke-width="2" fill="none" stroke-linejoin="round"/></svg>
<div class="abs" style="left:394.8px;top:503.2px;width:13px;height:2px;background:#3f8fb8;border-radius:1px"></div>
<div class="t" style="top:498.69px;font-size:11px;font-weight:400;color:#616161;line-height:11px;letter-spacing:0.350px;left:415.10px;">Aug 5–Nov 2, 2024</div>
<div class="abs" style="left:533.6px;top:503.2px;width:13px;height:1.5px;background-image:linear-gradient(to right,#86b4cc 45%,transparent 45%);background-size:4.4px 1.5px"></div>
<div class="t" style="top:498.69px;font-size:11px;font-weight:400;color:#616161;line-height:11px;letter-spacing:0.350px;left:553.90px;">May 7–Aug 4, 2024</div>
<div class="card" style="left:810px;top:178px;width:529px;height:354px"></div>
<div class="t" style="top:195.00px;font-size:13px;font-weight:400;color:#303030;line-height:13px;-webkit-text-stroke:0.3px #303030;letter-spacing:0.355px;left:826.20px;">Sales by channel</div>
<div class="abs" style="left:826.0px;top:209.5px;width:104.7px;height:1.5px;background-image:linear-gradient(to right,#b8b8b8 40%,transparent 40%);background-size:4px 1.5px"></div>
<div class="t" style="top:234.49px;font-size:11px;font-weight:400;color:#616161;line-height:11px;letter-spacing:0.250px;left:826.40px;">Online Store</div>
<div class="abs" style="left:826px;top:250.2px;width:212.9px;height:18.5px;background:#3fa3dc;border-radius:0 3px 3px 0"></div>
<div class="abs" style="left:826px;top:270.9px;width:400.6px;height:18.2px;background:#97c8e7;border-radius:0 3px 3px 0"></div>
<div class="t" style="top:254.19px;font-size:11px;font-weight:400;color:#616161;line-height:11px;letter-spacing:0.250px;left:1049.40px;">€26.6K</div>
<svg class="abs" style="left:1100.6px;top:255.0px" width="7" height="7" viewBox="0 0 7 7"><path d="M1 1 L5.6 5.6 M5.8 2.2 L5.8 5.8 L2.2 5.8" stroke="#4a4a4a" stroke-width="1.6" fill="none"/></svg>
<div class="t" style="top:254.47px;font-size:11.5px;font-weight:700;color:#616161;line-height:11.5px;letter-spacing:0.200px;left:1110.10px;">47%</div>
<div class="t" style="top:274.69px;font-size:11px;font-weight:400;color:#616161;line-height:11px;letter-spacing:0.250px;left:1237.50px;">€49.9K</div>
<div class="t" style="top:310.79px;font-size:11px;font-weight:400;color:#616161;line-height:11px;letter-spacing:0.250px;left:826.40px;">Misteriozna App</div>
<div class="abs" style="left:826px;top:326px;width:95.8px;height:17.6px;background:#3fa3dc;border-radius:0 3px 3px 0"></div>
<div class="abs" style="left:826px;top:346.5px;width:101.7px;height:17.9px;background:#97c8e7;border-radius:0 3px 3px 0"></div>
<div class="t" style="top:329.69px;font-size:11px;font-weight:400;color:#616161;line-height:11px;letter-spacing:0.250px;left:932.80px;">€12K</div>
<svg class="abs" style="left:970.0px;top:330.5px" width="7" height="7" viewBox="0 0 7 7"><path d="M1 1 L5.6 5.6 M5.8 2.2 L5.8 5.8 L2.2 5.8" stroke="#4a4a4a" stroke-width="1.6" fill="none"/></svg>
<div class="t" style="top:329.97px;font-size:11.5px;font-weight:700;color:#616161;line-height:11.5px;letter-spacing:0.200px;left:979.50px;">5%</div>
<div class="t" style="top:350.69px;font-size:11px;font-weight:400;color:#616161;line-height:11px;letter-spacing:0.250px;left:938.50px;">€12.7K</div>
<div class="t" style="top:385.69px;font-size:11px;font-weight:400;color:#616161;line-height:11px;letter-spacing:0.250px;left:826.30px;">Woocommerce</div>
<div class="abs" style="left:825.8px;top:401px;width:1.2px;height:18.8px;background:#3f8fb8"></div>
<div class="t" style="top:404.49px;font-size:11px;font-weight:400;color:#616161;line-height:11px;letter-spacing:0.250px;left:837.50px;">€49.9</div>
<div class="t" style="top:461.59px;font-size:11px;font-weight:400;color:#616161;line-height:11px;letter-spacing:0.250px;left:826.30px;">Shopify Mobile for iPhone</div>
<div class="abs" style="left:825.8px;top:476.4px;width:1.2px;height:18.9px;background:#3f8fb8"></div>
<div class="abs" style="left:825.8px;top:497.6px;width:1.2px;height:18.1px;background:#97c8e7"></div>
<div class="t" style="top:480.49px;font-size:11px;font-weight:400;color:#616161;line-height:11px;letter-spacing:0.250px;left:837.50px;">€0</div>
<svg class="abs" style="left:862.0px;top:481.3px" width="7" height="7" viewBox="0 0 7 7"><path d="M1 1 L5.6 5.6 M5.8 2.2 L5.8 5.8 L2.2 5.8" stroke="#4a4a4a" stroke-width="1.6" fill="none"/></svg>
<div class="t" style="top:480.77px;font-size:11.5px;font-weight:700;color:#616161;line-height:11.5px;letter-spacing:0.200px;left:871.50px;">100%</div>
<div class="t" style="top:501.69px;font-size:11px;font-weight:400;color:#616161;line-height:11px;letter-spacing:0.250px;left:837.50px;">€145.8</div>
<div class="card" style="left:1355px;top:178px;width:530px;height:354px"></div>
<div class="t" style="top:195.00px;font-size:13px;font-weight:400;color:#303030;line-height:13px;-webkit-text-stroke:0.3px #303030;letter-spacing:0.415px;left:1371.20px;">Online store sessions</div>
<div class="abs" style="left:1371.0px;top:209.5px;width:133px;height:1.5px;background-image:linear-gradient(to right,#b8b8b8 40%,transparent 40%);background-size:4px 1.5px"></div>
<div class="t" style="top:226.42px;font-size:21px;font-weight:700;color:#303030;line-height:21px;letter-spacing:0.461px;left:1371.50px;">29,856</div>
<svg class="abs" style="left:1447.0px;top:233.7px" width="7" height="7" viewBox="0 0 7 7"><path d="M1 6 L5.6 1.4 M2.2 1.2 L5.8 1.2 L5.8 4.8" stroke="#29845a" stroke-width="1.6" fill="none"/></svg>
<div class="t" style="top:233.17px;font-size:11.5px;font-weight:700;color:#29845a;line-height:11.5px;letter-spacing:0.200px;left:1456.50px;">28%</div>
<div class="abs" style="left:1416.7px;top:272.0px;width:447.3px;height:1px;background:#efefef"></div>
<div class="t" style="top:266.59px;font-size:11px;font-weight:400;color:#616161;line-height:11px;letter-spacing:0.600px;left:1373.30px;">800</div>
<div class="abs" style="left:1416.7px;top:315.5px;width:447.3px;height:1px;background:#efefef"></div>
<div class="t" style="top:310.09px;font-size:11px;font-weight:400;color:#616161;line-height:11px;letter-spacing:0.600px;left:1373.30px;">600</div>
<div class="abs" style="left:1416.7px;top:358.8px;width:447.3px;height:1px;background:#efefef"></div>
<div class="t" style="top:353.39px;font-size:11px;font-weight:400;color:#616161;line-height:11px;letter-spacing:0.600px;left:1373.30px;">400</div>
<div class="abs" style="left:1416.7px;top:402.1px;width:447.3px;height:1px;background:#efefef"></div>
<div class="t" style="top:396.69px;font-size:11px;font-weight:400;color:#616161;line-height:11px;letter-spacing:0.600px;left:1373.30px;">200</div>
<div class="abs" style="left:1416.7px;top:445.3px;width:447.3px;height:1px;background:#efefef"></div>
<div class="t" style="top:439.89px;font-size:11px;font-weight:400;color:#616161;line-height:11px;letter-spacing:0.600px;left:1373.30px;">0</div>
<div class="t" style="top:461.69px;font-size:11px;font-weight:400;color:#616161;line-height:11px;letter-spacing:0.300px;left:1417.00px;transform:translateX(-50%);">Aug 5</div>
<div class="t" style="top:461.69px;font-size:11px;font-weight:400;color:#616161;line-height:11px;letter-spacing:0.300px;left:1482.31px;transform:translateX(-50%);">Aug 18</div>
<div class="t" style="top:461.69px;font-size:11px;font-weight:400;color:#616161;line-height:11px;letter-spacing:0.300px;left:1547.62px;transform:translateX(-50%);">Aug 31</div>
<div class="t" style="top:461.69px;font-size:11px;font-weight:400;color:#616161;line-height:11px;letter-spacing:0.300px;left:1612.94px;transform:translateX(-50%);">Sep 13</div>
<div class="t" style="top:461.69px;font-size:11px;font-weight:400;color:#616161;line-height:11px;letter-spacing:0.300px;left:1678.25px;transform:translateX(-50%);">Sep 26</div>
<div class="t" style="top:461.69px;font-size:11px;font-weight:400;color:#616161;line-height:11px;letter-spacing:0.300px;left:1743.56px;transform:translateX(-50%);">Oct 9</div>
<div class="t" style="top:461.69px;font-size:11px;font-weight:400;color:#616161;line-height:11px;letter-spacing:0.300px;left:1808.87px;transform:translateX(-50%);">Oct 22</div>
<svg class="abs" style="left:0;top:0" width="1919" height="954" viewBox="0 0 1919 954"><defs><linearGradient id="g3" x1="0" y1="0" x2="0" y2="1"><stop offset="0" stop-color="#4a9dc9" stop-opacity="0.07"/><stop offset="1" stop-color="#4a9dc9" stop-opacity="0.01"/></linearGradient></defs><path d="M1418.0 321.9 C1418.6 324.4 1420.7 333.9 1421.6 337.0 C1422.5 340.1 1422.6 335.2 1423.4 340.6 C1424.1 345.9 1425.1 363.7 1426.0 369.1 C1426.9 374.4 1427.9 371.1 1428.7 372.7 C1429.5 374.2 1430.4 377.4 1431.0 378.5 C1431.6 379.5 1431.8 379.0 1432.3 378.9 C1432.7 378.8 1432.8 380.2 1433.6 378.0 C1434.3 375.7 1435.9 367.9 1436.7 365.5 C1437.6 363.2 1437.8 366.7 1438.5 363.7 C1439.2 360.8 1440.2 350.8 1440.8 348.0 C1441.4 345.2 1441.6 346.7 1442.1 346.8 C1442.5 346.9 1442.7 344.7 1443.4 348.6 C1444.0 352.4 1445.4 366.2 1446.1 370.0 C1446.8 373.9 1447.0 371.7 1447.4 371.8 C1447.9 371.9 1448.1 373.2 1448.7 370.7 C1449.3 368.2 1450.2 359.9 1451.0 356.6 C1451.8 353.4 1452.6 353.1 1453.7 351.3 C1454.7 349.5 1456.0 348.3 1457.2 345.9 C1458.5 343.5 1460.4 338.4 1461.3 336.8 C1462.2 335.2 1462.1 336.2 1462.6 336.1 C1463.0 336.1 1463.1 335.5 1463.9 336.6 C1464.6 337.6 1466.0 340.5 1467.0 342.4 C1468.0 344.2 1468.8 343.6 1469.7 347.7 C1470.6 351.9 1471.3 359.8 1472.4 367.3 C1473.4 374.9 1475.2 388.4 1476.1 393.0 C1476.9 397.6 1476.9 394.9 1477.4 394.9 C1477.8 394.9 1477.9 397.6 1478.7 393.0 C1479.5 388.4 1480.9 377.1 1482.2 367.3 C1483.4 357.5 1485.3 340.1 1486.2 334.2 C1487.1 328.2 1487.1 331.9 1487.5 331.7 C1487.9 331.5 1488.1 329.8 1488.8 333.0 C1489.6 336.3 1491.0 347.3 1492.0 351.3 C1492.9 355.2 1493.8 353.2 1494.6 356.6 C1495.5 360.0 1496.3 368.9 1496.9 371.5 C1497.5 374.2 1497.8 372.7 1498.2 372.7 C1498.6 372.6 1499.0 374.5 1499.5 371.2 C1500.0 367.8 1500.8 356.1 1501.4 352.8 C1501.9 349.5 1502.2 351.3 1502.7 351.3 C1503.1 351.2 1503.2 349.6 1504.0 352.5 C1504.7 355.5 1505.9 365.9 1507.1 369.1 C1508.3 372.3 1510.3 371.1 1511.2 371.6 C1512.0 372.0 1512.0 372.2 1512.5 371.8 C1512.9 371.4 1513.0 375.5 1513.8 369.1 C1514.5 362.7 1515.6 339.5 1516.9 333.5 C1518.3 327.4 1520.8 332.8 1521.9 332.6 C1522.9 332.5 1522.7 332.4 1523.2 332.6 C1523.6 332.7 1523.7 331.4 1524.5 333.4 C1525.2 335.5 1526.2 340.3 1527.6 345.0 C1529.0 349.8 1531.4 356.4 1533.0 362.0 C1534.5 367.6 1536.1 375.6 1537.0 378.5 C1537.9 381.5 1537.9 379.7 1538.3 379.8 C1538.7 379.8 1539.1 381.0 1539.6 378.8 C1540.1 376.6 1540.9 368.7 1541.5 366.5 C1542.0 364.3 1542.3 365.6 1542.8 365.5 C1543.2 365.5 1543.4 364.5 1544.1 366.4 C1544.7 368.3 1546.1 375.2 1546.8 377.1 C1547.5 379.1 1547.7 377.9 1548.1 378.0 C1548.5 378.1 1548.9 378.5 1549.4 377.6 C1549.9 376.6 1550.7 373.2 1551.3 372.2 C1551.8 371.2 1552.1 371.5 1552.6 371.8 C1553.0 372.1 1553.1 368.6 1553.9 374.1 C1554.6 379.6 1555.4 399.5 1557.0 404.7 C1558.6 410.0 1561.5 404.7 1563.2 405.6 C1565.0 406.5 1566.6 409.6 1567.7 410.1 C1568.8 410.5 1569.2 412.5 1570.0 408.3 C1570.8 404.1 1571.3 389.0 1572.7 385.1 C1574.0 381.3 1576.5 393.3 1578.0 385.1 C1579.6 377.0 1581.2 345.0 1582.1 336.2 C1583.0 327.5 1582.9 332.5 1583.4 332.6 C1583.8 332.6 1583.9 327.0 1584.7 336.6 C1585.4 346.3 1586.6 378.0 1587.8 390.5 C1589.0 402.9 1591.0 407.5 1591.9 411.2 C1592.8 414.9 1592.7 412.8 1593.2 412.8 C1593.6 412.7 1593.9 415.1 1594.5 411.1 C1595.1 407.1 1595.5 393.0 1596.7 388.7 C1597.9 384.4 1600.6 386.0 1601.7 385.4 C1602.7 384.8 1602.5 385.1 1603.0 385.1 C1603.4 385.2 1603.4 384.3 1604.3 385.8 C1605.2 387.2 1607.0 389.9 1608.3 394.0 C1609.7 398.2 1611.5 407.6 1612.4 410.6 C1613.2 413.6 1613.2 411.7 1613.7 411.9 C1614.1 412.1 1614.1 411.9 1615.0 411.8 C1615.8 411.6 1617.8 420.8 1619.0 411.0 C1620.2 401.2 1621.4 363.4 1622.2 353.0 C1622.9 342.6 1623.0 348.8 1623.5 348.6 C1623.9 348.4 1624.2 345.0 1624.8 351.6 C1625.3 358.2 1626.1 381.7 1626.6 388.4 C1627.1 395.0 1627.5 390.9 1627.9 391.4 C1628.3 391.8 1628.3 391.8 1629.2 391.1 C1630.1 390.3 1631.8 390.9 1633.3 386.9 C1634.7 383.0 1636.3 372.0 1637.7 367.3 C1639.1 362.7 1640.9 360.5 1641.8 359.0 C1642.6 357.5 1642.6 358.0 1643.1 358.4 C1643.5 358.9 1643.6 353.8 1644.4 361.7 C1645.1 369.6 1646.3 397.8 1647.5 405.6 C1648.7 413.5 1650.7 408.3 1651.6 408.9 C1652.4 409.5 1652.4 410.0 1652.9 409.2 C1653.3 408.3 1653.4 416.5 1654.2 403.9 C1654.9 391.3 1656.3 346.1 1657.3 333.5 C1658.3 320.8 1659.2 334.9 1660.0 328.1 C1660.8 321.3 1661.7 298.9 1662.2 292.5 C1662.8 286.1 1663.1 289.6 1663.5 289.8 C1664.0 290.0 1664.3 285.2 1664.8 293.6 C1665.4 302.0 1666.2 331.9 1666.7 340.3 C1667.2 348.8 1667.6 343.6 1668.0 344.1 C1668.4 344.7 1668.6 344.6 1669.3 343.8 C1670.0 343.1 1670.9 340.5 1672.5 339.7 C1674.0 338.9 1677.1 340.1 1678.7 338.8 C1680.3 337.5 1680.5 332.9 1682.3 331.7 C1684.0 330.5 1687.6 326.0 1689.4 331.7 C1691.2 337.3 1691.7 359.5 1693.0 365.5 C1694.2 371.6 1696.1 367.6 1697.0 368.0 C1697.9 368.5 1697.9 368.6 1698.3 368.2 C1698.7 367.8 1698.9 371.2 1699.6 365.8 C1700.3 360.4 1701.7 341.3 1702.3 335.9 C1703.0 330.5 1703.2 333.6 1703.6 333.5 C1704.1 333.3 1704.1 331.6 1704.9 334.8 C1705.8 338.1 1707.8 342.0 1709.0 353.1 C1710.2 364.1 1711.4 392.5 1712.1 401.1 C1712.9 409.7 1713.0 404.6 1713.4 404.7 C1713.9 404.9 1714.1 408.0 1714.7 402.1 C1715.4 396.1 1716.8 375.0 1717.5 369.1 C1718.2 363.2 1718.4 366.4 1718.8 366.4 C1719.2 366.4 1719.4 363.2 1720.1 369.1 C1720.8 375.0 1722.2 396.1 1722.8 402.1 C1723.5 408.0 1723.7 404.5 1724.1 404.7 C1724.6 405.0 1724.6 406.5 1725.4 403.5 C1726.2 400.5 1727.7 396.7 1728.9 386.9 C1730.1 377.1 1731.8 352.2 1732.6 344.7 C1733.4 337.1 1733.5 341.2 1733.9 341.5 C1734.3 341.8 1734.6 335.5 1735.2 346.4 C1735.8 357.3 1736.8 396.0 1737.4 406.9 C1738.0 417.8 1738.3 411.7 1738.7 411.9 C1739.1 412.0 1739.3 416.9 1740.0 407.7 C1740.7 398.6 1742.1 366.3 1742.8 357.2 C1743.4 348.1 1743.6 353.0 1744.1 353.1 C1744.5 353.2 1744.7 347.3 1745.4 357.8 C1746.0 368.3 1747.4 405.5 1748.1 416.0 C1748.8 426.5 1749.0 420.0 1749.4 420.8 C1749.8 421.5 1750.0 421.1 1750.7 420.5 C1751.4 419.9 1752.6 423.1 1753.9 417.2 C1755.1 411.3 1756.8 394.1 1758.3 385.1 C1759.8 376.2 1761.9 367.4 1762.9 363.6 C1763.9 359.7 1763.8 361.6 1764.2 362.0 C1764.6 362.3 1764.9 357.6 1765.5 365.6 C1766.1 373.6 1767.1 402.0 1767.7 410.0 C1768.3 418.0 1768.6 413.6 1769.0 413.6 C1769.4 413.6 1769.6 418.0 1770.3 410.0 C1771.0 402.0 1772.4 373.6 1773.0 365.6 C1773.7 357.6 1773.9 362.3 1774.3 362.0 C1774.8 361.6 1774.9 359.7 1775.6 363.6 C1776.4 367.4 1777.6 379.9 1778.8 385.1 C1780.0 390.4 1782.0 393.3 1782.8 395.1 C1783.7 396.9 1783.7 395.8 1784.1 395.8 C1784.6 395.9 1784.9 396.4 1785.4 395.3 C1786.0 394.2 1786.8 390.3 1787.3 389.2 C1787.8 388.1 1788.2 388.4 1788.6 388.7 C1789.0 389.0 1789.2 385.6 1789.9 391.3 C1790.6 396.9 1792.0 417.0 1792.6 422.7 C1793.3 428.3 1793.5 425.1 1793.9 425.2 C1794.4 425.3 1794.6 427.4 1795.2 423.4 C1795.9 419.4 1797.3 405.2 1798.0 401.2 C1798.7 397.2 1798.9 399.3 1799.3 399.4 C1799.7 399.4 1800.1 396.9 1800.6 401.4 C1801.1 406.0 1801.9 422.2 1802.4 426.7 C1803.0 431.3 1803.3 428.7 1803.7 428.8 C1804.2 428.9 1804.0 430.9 1805.0 427.2 C1806.1 423.5 1808.6 415.9 1810.0 406.5 C1811.3 397.1 1812.4 377.3 1813.1 370.9 C1813.9 364.5 1814.0 368.5 1814.4 368.2 C1814.9 367.9 1814.8 366.8 1815.7 369.2 C1816.6 371.6 1818.4 373.6 1819.8 382.5 C1821.2 391.4 1822.8 415.2 1824.2 422.6 C1825.7 429.9 1827.4 426.0 1828.3 426.7 C1829.2 427.4 1829.2 427.5 1829.6 427.0 C1830.0 426.5 1830.1 431.2 1830.9 424.0 C1831.6 416.7 1832.8 390.7 1834.0 383.3 C1835.2 376.0 1837.2 380.6 1838.1 380.0 C1839.0 379.4 1839.0 379.7 1839.4 379.8 C1839.8 379.9 1840.0 378.6 1840.7 380.8 C1841.4 383.0 1842.8 390.8 1843.4 393.0 C1844.1 395.3 1844.3 394.1 1844.7 394.0 C1845.2 394.0 1845.3 396.1 1846.0 392.5 C1846.8 389.0 1848.0 376.9 1849.2 372.7 C1850.4 368.4 1852.3 367.9 1853.2 366.9 C1854.1 365.8 1854.1 366.3 1854.5 366.4 C1855.0 366.5 1855.1 364.8 1855.8 367.6 C1856.6 370.4 1857.6 380.3 1859.0 383.3 C1860.4 386.4 1863.4 385.6 1864.3 386.0 L1864.3 445.8 L1418.0 445.8 Z" fill="url(#g3)"/><path d="M1418.0 417.2 C1418.7 417.9 1421.2 420.6 1422.1 421.3 C1423.0 422.1 1422.9 421.8 1423.4 421.7 C1423.8 421.6 1424.1 422.8 1424.7 420.7 C1425.2 418.7 1426.0 411.3 1426.5 409.2 C1427.0 407.2 1427.4 408.3 1427.8 408.3 C1428.3 408.3 1428.4 407.3 1429.1 409.0 C1429.9 410.6 1431.2 416.2 1432.3 418.1 C1433.3 420.0 1434.7 420.1 1435.4 420.6 C1436.2 421.0 1436.3 420.8 1436.7 420.8 C1437.2 420.7 1437.4 421.2 1438.0 420.4 C1438.7 419.6 1440.1 416.6 1440.8 415.8 C1441.4 415.0 1441.6 415.5 1442.1 415.4 C1442.5 415.4 1442.7 415.3 1443.4 415.5 C1444.0 415.8 1445.4 416.8 1446.1 417.1 C1446.8 417.4 1447.0 417.5 1447.4 417.2 C1447.9 417.0 1448.2 419.2 1448.7 415.6 C1449.2 412.0 1450.0 399.3 1450.6 395.7 C1451.1 392.1 1451.4 394.2 1451.9 394.0 C1452.3 393.9 1452.7 393.4 1453.2 394.5 C1453.6 395.7 1453.7 397.1 1454.5 401.2 C1455.4 405.2 1456.6 416.0 1458.1 419.0 C1459.6 422.0 1461.5 420.2 1463.5 419.0 C1465.4 417.8 1468.4 415.8 1469.7 411.9 C1471.0 407.9 1470.6 398.3 1471.1 395.3 C1471.5 392.3 1471.9 394.0 1472.4 394.0 C1472.8 394.0 1472.9 392.3 1473.7 395.3 C1474.4 398.3 1475.0 408.9 1476.8 411.9 C1478.7 414.8 1482.2 411.9 1484.8 412.8 C1487.5 413.6 1490.5 416.5 1492.9 417.2 C1495.2 417.9 1496.6 417.2 1499.1 417.2 C1501.6 417.2 1505.0 418.1 1508.0 417.2 C1511.0 416.3 1513.9 415.0 1516.9 411.9 C1520.0 408.8 1524.5 401.0 1526.3 398.6 C1528.1 396.2 1527.2 397.6 1527.6 397.6 C1528.0 397.6 1528.3 395.9 1528.9 398.9 C1529.5 401.8 1529.6 411.9 1531.2 415.4 C1532.7 418.9 1536.6 419.0 1538.3 419.9 C1540.0 420.8 1540.7 420.6 1541.5 420.7 C1542.2 420.9 1542.3 420.8 1542.8 420.8 C1543.2 420.7 1543.4 421.2 1544.1 420.4 C1544.7 419.6 1546.1 416.6 1546.8 415.8 C1547.5 415.0 1547.7 415.5 1548.1 415.4 C1548.5 415.4 1548.4 415.3 1549.4 415.5 C1550.4 415.8 1553.0 416.8 1553.9 417.1 C1554.9 417.4 1554.8 417.3 1555.2 417.2 C1555.7 417.1 1555.8 418.4 1556.5 416.3 C1557.3 414.3 1558.5 407.2 1559.7 404.7 C1560.9 402.2 1562.8 402.0 1563.7 401.4 C1564.6 400.8 1564.6 401.1 1565.0 401.2 C1565.5 401.3 1565.7 400.1 1566.3 402.0 C1566.9 404.0 1568.1 410.8 1568.7 412.8 C1569.3 414.7 1569.6 413.6 1570.0 413.6 C1570.4 413.7 1570.5 414.2 1571.3 413.1 C1572.1 412.0 1574.1 408.1 1574.9 407.0 C1575.8 405.9 1575.8 406.6 1576.2 406.5 C1576.7 406.4 1576.7 406.4 1577.5 406.6 C1578.4 406.7 1580.4 407.2 1581.2 407.3 C1582.0 407.5 1582.0 407.6 1582.5 407.4 C1582.9 407.3 1583.4 408.5 1583.8 406.5 C1584.2 404.4 1584.4 397.0 1584.7 395.0 C1585.1 392.9 1585.6 394.1 1586.0 394.0 C1586.5 394.0 1586.7 393.3 1587.3 394.7 C1588.0 396.0 1589.4 400.9 1590.1 402.3 C1590.8 403.7 1590.9 403.1 1591.4 403.0 C1591.8 402.8 1591.7 404.6 1592.7 401.6 C1593.7 398.5 1596.2 387.8 1597.2 384.7 C1598.2 381.7 1598.1 383.3 1598.5 383.3 C1598.9 383.3 1598.5 381.7 1599.8 384.7 C1601.1 387.8 1604.9 398.5 1606.1 401.6 C1607.4 404.6 1607.0 402.7 1607.4 403.0 C1607.9 403.2 1607.7 403.1 1608.7 402.8 C1609.7 402.5 1612.3 401.6 1613.2 401.3 C1614.2 401.0 1614.1 401.0 1614.5 401.2 C1615.0 401.3 1615.5 399.7 1615.8 402.4 C1616.2 405.0 1616.4 414.3 1616.8 416.9 C1617.2 419.5 1617.7 418.2 1618.1 418.1 C1618.5 418.0 1618.9 420.3 1619.4 416.3 C1619.9 412.3 1620.7 398.1 1621.3 394.1 C1621.8 390.1 1622.1 392.4 1622.6 392.3 C1623.0 392.1 1623.2 391.4 1623.9 393.0 C1624.5 394.7 1625.9 400.5 1626.6 402.2 C1627.3 403.9 1627.5 402.8 1627.9 403.0 C1628.3 403.1 1627.0 403.0 1629.2 402.9 C1631.4 402.7 1637.8 402.3 1641.3 402.1 C1644.8 401.8 1648.3 407.3 1650.2 401.2 C1652.1 395.1 1651.6 372.3 1652.9 365.5 C1654.1 358.8 1656.8 361.5 1657.8 360.6 C1658.8 359.7 1658.7 360.1 1659.1 360.2 C1659.5 360.3 1659.9 358.8 1660.4 361.3 C1660.9 363.8 1661.7 372.6 1662.2 375.1 C1662.8 377.6 1663.1 376.3 1663.5 376.2 C1664.0 376.2 1664.3 377.9 1664.8 374.9 C1665.4 371.8 1666.2 361.0 1666.7 358.0 C1667.2 355.0 1667.6 356.7 1668.0 356.6 C1668.4 356.5 1668.6 355.8 1669.3 357.3 C1670.0 358.8 1671.4 364.2 1672.0 365.7 C1672.7 367.3 1672.9 366.9 1673.3 366.4 C1673.8 365.9 1674.0 370.7 1674.6 362.9 C1675.3 355.0 1676.7 327.1 1677.4 319.2 C1678.1 311.3 1678.3 315.9 1678.7 315.6 C1679.1 315.4 1679.4 312.5 1680.0 317.9 C1680.6 323.2 1681.2 337.2 1682.3 347.7 C1683.3 358.2 1685.4 374.9 1686.3 380.9 C1687.2 386.8 1687.2 383.1 1687.6 383.3 C1688.0 383.6 1688.3 384.7 1688.9 382.4 C1689.5 380.0 1690.4 373.8 1691.2 369.1 C1691.9 364.4 1692.8 356.9 1693.4 354.2 C1694.0 351.5 1694.3 352.6 1694.7 353.1 C1695.2 353.6 1695.7 348.1 1696.0 357.2 C1696.4 366.3 1696.6 398.6 1697.0 407.7 C1697.4 416.9 1697.9 411.5 1698.3 411.9 C1698.7 412.2 1698.9 414.6 1699.6 409.6 C1700.3 404.6 1701.7 387.0 1702.3 382.0 C1703.0 377.1 1703.2 380.1 1703.6 379.8 C1704.1 379.5 1704.0 379.2 1704.9 380.3 C1705.9 381.4 1708.5 385.3 1709.5 386.4 C1710.4 387.5 1710.3 387.0 1710.8 386.9 C1711.2 386.9 1711.1 387.8 1712.1 386.2 C1713.0 384.5 1715.6 378.6 1716.6 377.0 C1717.6 375.3 1717.5 376.2 1717.9 376.2 C1718.3 376.2 1718.0 375.0 1719.2 377.1 C1720.4 379.2 1723.7 388.8 1725.0 388.7 C1726.3 388.6 1726.4 380.8 1727.1 376.2 C1727.9 371.7 1728.8 364.0 1729.4 361.3 C1730.0 358.6 1730.3 360.2 1730.7 360.2 C1731.1 360.2 1731.4 358.6 1732.0 361.3 C1732.6 364.0 1733.2 373.6 1734.3 376.2 C1735.3 378.8 1737.4 376.9 1738.3 377.1 C1739.2 377.2 1739.2 377.6 1739.6 377.1 C1740.0 376.7 1740.5 380.5 1740.9 374.3 C1741.3 368.1 1741.5 346.0 1741.9 339.8 C1742.2 333.6 1742.7 337.4 1743.2 337.0 C1743.6 336.6 1743.9 336.7 1744.5 337.3 C1745.1 337.9 1744.9 338.5 1746.7 340.6 C1748.6 342.6 1753.8 346.1 1755.6 349.5 C1757.5 352.9 1757.3 359.0 1757.9 361.1 C1758.5 363.2 1758.8 362.1 1759.2 362.0 C1759.6 361.9 1759.9 363.9 1760.5 360.5 C1761.1 357.1 1760.8 345.1 1762.8 341.5 C1764.7 337.9 1770.4 339.4 1772.2 339.0 C1773.9 338.5 1773.0 338.7 1773.5 338.8 C1773.9 338.9 1773.9 337.6 1774.8 339.7 C1775.6 341.8 1777.8 348.8 1778.8 351.3 C1779.9 353.8 1780.5 354.0 1781.1 354.6 C1781.7 355.2 1781.9 355.0 1782.4 354.8 C1782.8 354.7 1782.8 356.4 1783.7 353.6 C1784.5 350.8 1786.5 341.0 1787.3 338.3 C1788.1 335.5 1788.2 336.9 1788.6 337.0 C1789.0 337.1 1788.6 334.6 1789.9 338.8 C1791.2 342.9 1794.5 356.3 1796.6 362.0 C1798.7 367.6 1801.3 370.8 1802.4 372.7 C1803.6 374.7 1803.3 373.5 1803.7 373.5 C1804.2 373.6 1803.9 374.0 1805.0 373.2 C1806.2 372.5 1808.6 372.0 1810.9 369.1 C1813.1 366.2 1817.0 358.2 1818.5 355.8 C1820.0 353.5 1819.4 354.4 1819.8 354.8 C1820.2 355.2 1820.4 350.8 1821.1 358.2 C1821.8 365.7 1823.2 392.1 1823.8 399.6 C1824.5 407.0 1824.7 402.6 1825.1 403.0 C1825.6 403.3 1825.8 405.0 1826.4 401.5 C1827.0 397.9 1827.6 387.6 1828.7 381.6 C1829.7 375.5 1831.9 368.0 1832.7 365.0 C1833.6 362.0 1833.6 363.5 1834.0 363.7 C1834.5 364.0 1834.8 360.6 1835.3 366.4 C1835.9 372.2 1836.7 392.7 1837.2 398.5 C1837.7 404.3 1838.1 401.1 1838.5 401.2 C1838.9 401.3 1839.0 403.6 1839.8 399.2 C1840.6 394.8 1842.6 379.1 1843.4 374.7 C1844.3 370.2 1844.3 372.7 1844.7 372.7 C1845.2 372.6 1845.1 370.8 1846.0 374.2 C1847.0 377.5 1849.6 389.2 1850.6 392.5 C1851.5 395.9 1851.4 394.0 1851.9 394.0 C1852.3 394.1 1852.8 395.5 1853.2 392.9 C1853.5 390.2 1853.7 380.9 1854.1 378.3 C1854.5 375.7 1855.0 377.0 1855.4 377.1 C1855.9 377.3 1855.5 374.3 1856.7 379.2 C1857.9 384.1 1861.6 402.0 1862.6 406.5" stroke="#86b4cc" stroke-width="1.8" fill="none" stroke-dasharray="0.1 3.5" stroke-linecap="round"/><path d="M1418.0 321.9 C1418.6 324.4 1420.7 333.9 1421.6 337.0 C1422.5 340.1 1422.6 335.2 1423.4 340.6 C1424.1 345.9 1425.1 363.7 1426.0 369.1 C1426.9 374.4 1427.9 371.1 1428.7 372.7 C1429.5 374.2 1430.4 377.4 1431.0 378.5 C1431.6 379.5 1431.8 379.0 1432.3 378.9 C1432.7 378.8 1432.8 380.2 1433.6 378.0 C1434.3 375.7 1435.9 367.9 1436.7 365.5 C1437.6 363.2 1437.8 366.7 1438.5 363.7 C1439.2 360.8 1440.2 350.8 1440.8 348.0 C1441.4 345.2 1441.6 346.7 1442.1 346.8 C1442.5 346.9 1442.7 344.7 1443.4 348.6 C1444.0 352.4 1445.4 366.2 1446.1 370.0 C1446.8 373.9 1447.0 371.7 1447.4 371.8 C1447.9 371.9 1448.1 373.2 1448.7 370.7 C1449.3 368.2 1450.2 359.9 1451.0 356.6 C1451.8 353.4 1452.6 353.1 1453.7 351.3 C1454.7 349.5 1456.0 348.3 1457.2 345.9 C1458.5 343.5 1460.4 338.4 1461.3 336.8 C1462.2 335.2 1462.1 336.2 1462.6 336.1 C1463.0 336.1 1463.1 335.5 1463.9 336.6 C1464.6 337.6 1466.0 340.5 1467.0 342.4 C1468.0 344.2 1468.8 343.6 1469.7 347.7 C1470.6 351.9 1471.3 359.8 1472.4 367.3 C1473.4 374.9 1475.2 388.4 1476.1 393.0 C1476.9 397.6 1476.9 394.9 1477.4 394.9 C1477.8 394.9 1477.9 397.6 1478.7 393.0 C1479.5 388.4 1480.9 377.1 1482.2 367.3 C1483.4 357.5 1485.3 340.1 1486.2 334.2 C1487.1 328.2 1487.1 331.9 1487.5 331.7 C1487.9 331.5 1488.1 329.8 1488.8 333.0 C1489.6 336.3 1491.0 347.3 1492.0 351.3 C1492.9 355.2 1493.8 353.2 1494.6 356.6 C1495.5 360.0 1496.3 368.9 1496.9 371.5 C1497.5 374.2 1497.8 372.7 1498.2 372.7 C1498.6 372.6 1499.0 374.5 1499.5 371.2 C1500.0 367.8 1500.8 356.1 1501.4 352.8 C1501.9 349.5 1502.2 351.3 1502.7 351.3 C1503.1 351.2 1503.2 349.6 1504.0 352.5 C1504.7 355.5 1505.9 365.9 1507.1 369.1 C1508.3 372.3 1510.3 371.1 1511.2 371.6 C1512.0 372.0 1512.0 372.2 1512.5 371.8 C1512.9 371.4 1513.0 375.5 1513.8 369.1 C1514.5 362.7 1515.6 339.5 1516.9 333.5 C1518.3 327.4 1520.8 332.8 1521.9 332.6 C1522.9 332.5 1522.7 332.4 1523.2 332.6 C1523.6 332.7 1523.7 331.4 1524.5 333.4 C1525.2 335.5 1526.2 340.3 1527.6 345.0 C1529.0 349.8 1531.4 356.4 1533.0 362.0 C1534.5 367.6 1536.1 375.6 1537.0 378.5 C1537.9 381.5 1537.9 379.7 1538.3 379.8 C1538.7 379.8 1539.1 381.0 1539.6 378.8 C1540.1 376.6 1540.9 368.7 1541.5 366.5 C1542.0 364.3 1542.3 365.6 1542.8 365.5 C1543.2 365.5 1543.4 364.5 1544.1 366.4 C1544.7 368.3 1546.1 375.2 1546.8 377.1 C1547.5 379.1 1547.7 377.9 1548.1 378.0 C1548.5 378.1 1548.9 378.5 1549.4 377.6 C1549.9 376.6 1550.7 373.2 1551.3 372.2 C1551.8 371.2 1552.1 371.5 1552.6 371.8 C1553.0 372.1 1553.1 368.6 1553.9 374.1 C1554.6 379.6 1555.4 399.5 1557.0 404.7 C1558.6 410.0 1561.5 404.7 1563.2 405.6 C1565.0 406.5 1566.6 409.6 1567.7 410.1 C1568.8 410.5 1569.2 412.5 1570.0 408.3 C1570.8 404.1 1571.3 389.0 1572.7 385.1 C1574.0 381.3 1576.5 393.3 1578.0 385.1 C1579.6 377.0 1581.2 345.0 1582.1 336.2 C1583.0 327.5 1582.9 332.5 1583.4 332.6 C1583.8 332.6 1583.9 327.0 1584.7 336.6 C1585.4 346.3 1586.6 378.0 1587.8 390.5 C1589.0 402.9 1591.0 407.5 1591.9 411.2 C1592.8 414.9 1592.7 412.8 1593.2 412.8 C1593.6 412.7 1593.9 415.1 1594.5 411.1 C1595.1 407.1 1595.5 393.0 1596.7 388.7 C1597.9 384.4 1600.6 386.0 1601.7 385.4 C1602.7 384.8 1602.5 385.1 1603.0 385.1 C1603.4 385.2 1603.4 384.3 1604.3 385.8 C1605.2 387.2 1607.0 389.9 1608.3 394.0 C1609.7 398.2 1611.5 407.6 1612.4 410.6 C1613.2 413.6 1613.2 411.7 1613.7 411.9 C1614.1 412.1 1614.1 411.9 1615.0 411.8 C1615.8 411.6 1617.8 420.8 1619.0 411.0 C1620.2 401.2 1621.4 363.4 1622.2 353.0 C1622.9 342.6 1623.0 348.8 1623.5 348.6 C1623.9 348.4 1624.2 345.0 1624.8 351.6 C1625.3 358.2 1626.1 381.7 1626.6 388.4 C1627.1 395.0 1627.5 390.9 1627.9 391.4 C1628.3 391.8 1628.3 391.8 1629.2 391.1 C1630.1 390.3 1631.8 390.9 1633.3 386.9 C1634.7 383.0 1636.3 372.0 1637.7 367.3 C1639.1 362.7 1640.9 360.5 1641.8 359.0 C1642.6 357.5 1642.6 358.0 1643.1 358.4 C1643.5 358.9 1643.6 353.8 1644.4 361.7 C1645.1 369.6 1646.3 397.8 1647.5 405.6 C1648.7 413.5 1650.7 408.3 1651.6 408.9 C1652.4 409.5 1652.4 410.0 1652.9 409.2 C1653.3 408.3 1653.4 416.5 1654.2 403.9 C1654.9 391.3 1656.3 346.1 1657.3 333.5 C1658.3 320.8 1659.2 334.9 1660.0 328.1 C1660.8 321.3 1661.7 298.9 1662.2 292.5 C1662.8 286.1 1663.1 289.6 1663.5 289.8 C1664.0 290.0 1664.3 285.2 1664.8 293.6 C1665.4 302.0 1666.2 331.9 1666.7 340.3 C1667.2 348.8 1667.6 343.6 1668.0 344.1 C1668.4 344.7 1668.6 344.6 1669.3 343.8 C1670.0 343.1 1670.9 340.5 1672.5 339.7 C1674.0 338.9 1677.1 340.1 1678.7 338.8 C1680.3 337.5 1680.5 332.9 1682.3 331.7 C1684.0 330.5 1687.6 326.0 1689.4 331.7 C1691.2 337.3 1691.7 359.5 1693.0 365.5 C1694.2 371.6 1696.1 367.6 1697.0 368.0 C1697.9 368.5 1697.9 368.6 1698.3 368.2 C1698.7 367.8 1698.9 371.2 1699.6 365.8 C1700.3 360.4 1701.7 341.3 1702.3 335.9 C1703.0 330.5 1703.2 333.6 1703.6 333.5 C1704.1 333.3 1704.1 331.6 1704.9 334.8 C1705.8 338.1 1707.8 342.0 1709.0 353.1 C1710.2 364.1 1711.4 392.5 1712.1 401.1 C1712.9 409.7 1713.0 404.6 1713.4 404.7 C1713.9 404.9 1714.1 408.0 1714.7 402.1 C1715.4 396.1 1716.8 375.0 1717.5 369.1 C1718.2 363.2 1718.4 366.4 1718.8 366.4 C1719.2 366.4 1719.4 363.2 1720.1 369.1 C1720.8 375.0 1722.2 396.1 1722.8 402.1 C1723.5 408.0 1723.7 404.5 1724.1 404.7 C1724.6 405.0 1724.6 406.5 1725.4 403.5 C1726.2 400.5 1727.7 396.7 1728.9 386.9 C1730.1 377.1 1731.8 352.2 1732.6 344.7 C1733.4 337.1 1733.5 341.2 1733.9 341.5 C1734.3 341.8 1734.6 335.5 1735.2 346.4 C1735.8 357.3 1736.8 396.0 1737.4 406.9 C1738.0 417.8 1738.3 411.7 1738.7 411.9 C1739.1 412.0 1739.3 416.9 1740.0 407.7 C1740.7 398.6 1742.1 366.3 1742.8 357.2 C1743.4 348.1 1743.6 353.0 1744.1 353.1 C1744.5 353.2 1744.7 347.3 1745.4 357.8 C1746.0 368.3 1747.4 405.5 1748.1 416.0 C1748.8 426.5 1749.0 420.0 1749.4 420.8 C1749.8 421.5 1750.0 421.1 1750.7 420.5 C1751.4 419.9 1752.6 423.1 1753.9 417.2 C1755.1 411.3 1756.8 394.1 1758.3 385.1 C1759.8 376.2 1761.9 367.4 1762.9 363.6 C1763.9 359.7 1763.8 361.6 1764.2 362.0 C1764.6 362.3 1764.9 357.6 1765.5 365.6 C1766.1 373.6 1767.1 402.0 1767.7 410.0 C1768.3 418.0 1768.6 413.6 1769.0 413.6 C1769.4 413.6 1769.6 418.0 1770.3 410.0 C1771.0 402.0 1772.4 373.6 1773.0 365.6 C1773.7 357.6 1773.9 362.3 1774.3 362.0 C1774.8 361.6 1774.9 359.7 1775.6 363.6 C1776.4 367.4 1777.6 379.9 1778.8 385.1 C1780.0 390.4 1782.0 393.3 1782.8 395.1 C1783.7 396.9 1783.7 395.8 1784.1 395.8 C1784.6 395.9 1784.9 396.4 1785.4 395.3 C1786.0 394.2 1786.8 390.3 1787.3 389.2 C1787.8 388.1 1788.2 388.4 1788.6 388.7 C1789.0 389.0 1789.2 385.6 1789.9 391.3 C1790.6 396.9 1792.0 417.0 1792.6 422.7 C1793.3 428.3 1793.5 425.1 1793.9 425.2 C1794.4 425.3 1794.6 427.4 1795.2 423.4 C1795.9 419.4 1797.3 405.2 1798.0 401.2 C1798.7 397.2 1798.9 399.3 1799.3 399.4 C1799.7 399.4 1800.1 396.9 1800.6 401.4 C1801.1 406.0 1801.9 422.2 1802.4 426.7 C1803.0 431.3 1803.3 428.7 1803.7 428.8 C1804.2 428.9 1804.0 430.9 1805.0 427.2 C1806.1 423.5 1808.6 415.9 1810.0 406.5 C1811.3 397.1 1812.4 377.3 1813.1 370.9 C1813.9 364.5 1814.0 368.5 1814.4 368.2 C1814.9 367.9 1814.8 366.8 1815.7 369.2 C1816.6 371.6 1818.4 373.6 1819.8 382.5 C1821.2 391.4 1822.8 415.2 1824.2 422.6 C1825.7 429.9 1827.4 426.0 1828.3 426.7 C1829.2 427.4 1829.2 427.5 1829.6 427.0 C1830.0 426.5 1830.1 431.2 1830.9 424.0 C1831.6 416.7 1832.8 390.7 1834.0 383.3 C1835.2 376.0 1837.2 380.6 1838.1 380.0 C1839.0 379.4 1839.0 379.7 1839.4 379.8 C1839.8 379.9 1840.0 378.6 1840.7 380.8 C1841.4 383.0 1842.8 390.8 1843.4 393.0 C1844.1 395.3 1844.3 394.1 1844.7 394.0 C1845.2 394.0 1845.3 396.1 1846.0 392.5 C1846.8 389.0 1848.0 376.9 1849.2 372.7 C1850.4 368.4 1852.3 367.9 1853.2 366.9 C1854.1 365.8 1854.1 366.3 1854.5 366.4 C1855.0 366.5 1855.1 364.8 1855.8 367.6 C1856.6 370.4 1857.6 380.3 1859.0 383.3 C1860.4 386.4 1863.4 385.6 1864.3 386.0" stroke="#4a9dc9" stroke-width="2" fill="none" stroke-linejoin="round"/></svg>
<div class="abs" style="left:1485.8px;top:503.2px;width:13px;height:2px;background:#3f8fb8;border-radius:1px"></div>
<div class="t" style="top:498.69px;font-size:11px;font-weight:400;color:#616161;line-height:11px;letter-spacing:0.350px;left:1506.10px;">Aug 5–Nov 2, 2024</div>
<div class="abs" style="left:1624.6px;top:503.2px;width:13px;height:1.5px;background-image:linear-gradient(to right,#86b4cc 45%,transparent 45%);background-size:4.4px 1.5px"></div>
<div class="t" style="top:498.69px;font-size:11px;font-weight:400;color:#616161;line-height:11px;letter-spacing:0.350px;left:1644.90px;">May 7–Aug 4, 2024</div>
<div class="card" style="left:264px;top:548px;width:530px;height:354px"></div>
<div class="t" style="top:565.00px;font-size:13px;font-weight:400;color:#303030;line-height:13px;-webkit-text-stroke:0.3px #303030;letter-spacing:0.468px;left:280.20px;">Online store conversion rate</div>
<div class="abs" style="left:280.0px;top:579.5px;width:175.7px;height:1.5px;background-image:linear-gradient(to right,#b8b8b8 40%,transparent 40%);background-size:4px 1.5px"></div>
<div class="t" style="top:596.42px;font-size:21px;font-weight:700;color:#303030;line-height:21px;letter-spacing:0.351px;left:280.50px;">0.83%</div>
<svg class="abs" style="left:353.0px;top:603.7px" width="7" height="7" viewBox="0 0 7 7"><path d="M1 1 L5.6 5.6 M5.8 2.2 L5.8 5.8 L2.2 5.8" stroke="#4a4a4a" stroke-width="1.6" fill="none"/></svg>
<div class="t" style="top:603.17px;font-size:11.5px;font-weight:700;color:#616161;line-height:11.5px;letter-spacing:0.200px;left:362.50px;">52%</div>
<div class="t" style="top:654.00px;font-size:13px;font-weight:400;color:#303030;line-height:13px;letter-spacing:0.498px;left:280.40px;">Added to cart</div>
<div class="t" style="top:673.80px;font-size:13px;font-weight:400;color:#616161;line-height:13px;letter-spacing:-0.069px;left:280.40px;">1,811 sessions</div>
<div class="t" style="top:664.00px;font-size:13px;font-weight:400;color:#303030;line-height:13px;letter-spacing:0.305px;right:1248.50px;">6.07%</div>
<svg class="abs" style="left:744.0px;top:666.5px" width="7" height="7" viewBox="0 0 7 7"><path d="M1 1 L5.6 5.6 M5.8 2.2 L5.8 5.8 L2.2 5.8" stroke="#4a4a4a" stroke-width="1.6" fill="none"/></svg>
<div class="t" style="top:666.07px;font-size:11.5px;font-weight:700;color:#616161;line-height:11.5px;letter-spacing:0.200px;right:1141.00px;">42%</div>
<div class="abs" style="left:265px;top:702.0px;width:528px;height:1px;background:#e3e3e3"></div>
<div class="t" style="top:719.00px;font-size:13px;font-weight:400;color:#303030;line-height:13px;letter-spacing:0.407px;left:280.40px;">Reached checkout</div>
<div class="t" style="top:738.80px;font-size:13px;font-weight:400;color:#616161;line-height:13px;letter-spacing:0.259px;left:280.40px;">431 sessions</div>
<div class="t" style="top:729.00px;font-size:13px;font-weight:400;color:#303030;line-height:13px;letter-spacing:0.305px;right:1248.50px;">1.44%</div>
<svg class="abs" style="left:744.0px;top:731.5px" width="7" height="7" viewBox="0 0 7 7"><path d="M1 1 L5.6 5.6 M5.8 2.2 L5.8 5.8 L2.2 5.8" stroke="#4a4a4a" stroke-width="1.6" fill="none"/></svg>
<div class="t" style="top:731.07px;font-size:11.5px;font-weight:700;color:#616161;line-height:11.5px;letter-spacing:0.200px;right:1141.00px;">50%</div>
<div class="abs" style="left:265px;top:767.0px;width:528px;height:1px;background:#e3e3e3"></div>
<div class="t" style="top:784.00px;font-size:13px;font-weight:400;color:#303030;line-height:13px;letter-spacing:0.441px;left:280.40px;">Sessions converted</div>
<div class="t" style="top:803.80px;font-size:13px;font-weight:400;color:#616161;line-height:13px;letter-spacing:0.467px;left:280.40px;">248 sessions</div>
<div class="t" style="top:794.00px;font-size:13px;font-weight:400;color:#303030;line-height:13px;letter-spacing:0.305px;right:1248.50px;">0.83%</div>
<svg class="abs" style="left:744.0px;top:796.5px" width="7" height="7" viewBox="0 0 7 7"><path d="M1 1 L5.6 5.6 M5.8 2.2 L5.8 5.8 L2.2 5.8" stroke="#4a4a4a" stroke-width="1.6" fill="none"/></svg>
<div class="t" style="top:796.07px;font-size:11.5px;font-weight:700;color:#616161;line-height:11.5px;letter-spacing:0.200px;right:1141.00px;">52%</div>
<div class="card" style="left:810px;top:548px;width:529px;height:354px"></div>
<div class="t" style="top:565.00px;font-size:13px;font-weight:400;color:#303030;line-height:13px;-webkit-text-stroke:0.3px #303030;letter-spacing:0.482px;left:826.20px;">Total orders</div>
<div class="abs" style="left:826.0px;top:579.5px;width:73.7px;height:1.5px;background-image:linear-gradient(to right,#b8b8b8 40%,transparent 40%);background-size:4px 1.5px"></div>
<div class="t" style="top:596.42px;font-size:21px;font-weight:700;color:#303030;line-height:21px;letter-spacing:-1.082px;left:826.50px;">313</div>
<svg class="abs" style="left:866.0px;top:603.7px" width="7" height="7" viewBox="0 0 7 7"><path d="M1 1 L5.6 5.6 M5.8 2.2 L5.8 5.8 L2.2 5.8" stroke="#4a4a4a" stroke-width="1.6" fill="none"/></svg>
<div class="t" style="top:603.17px;font-size:11.5px;font-weight:700;color:#616161;line-height:11.5px;letter-spacing:0.200px;left:875.50px;">38%</div>
<div class="abs" style="left:862.4px;top:642.3px;width:456.9px;height:1px;background:#efefef"></div>
<div class="t" style="top:636.89px;font-size:11px;font-weight:400;color:#616161;line-height:11px;letter-spacing:0.600px;left:828.00px;">30</div>
<div class="abs" style="left:862.4px;top:700.0px;width:456.9px;height:1px;background:#efefef"></div>
<div class="t" style="top:694.59px;font-size:11px;font-weight:400;color:#616161;line-height:11px;letter-spacing:0.600px;left:828.00px;">20</div>
<div class="abs" style="left:862.4px;top:757.7px;width:456.9px;height:1px;background:#efefef"></div>
<div class="t" style="top:752.29px;font-size:11px;font-weight:400;color:#616161;line-height:11px;letter-spacing:0.600px;left:828.00px;">10</div>
<div class="abs" style="left:862.4px;top:815.3px;width:456.9px;height:1px;background:#efefef"></div>
<div class="t" style="top:809.89px;font-size:11px;font-weight:400;color:#616161;line-height:11px;letter-spacing:0.600px;left:828.00px;">0</div>
<div class="t" style="top:831.69px;font-size:11px;font-weight:400;color:#616161;line-height:11px;letter-spacing:0.300px;left:863.20px;transform:translateX(-50%);">Aug 5</div>
<div class="t" style="top:831.69px;font-size:11px;font-weight:400;color:#616161;line-height:11px;letter-spacing:0.300px;left:924.70px;transform:translateX(-50%);">Aug 17</div>
<div class="t" style="top:831.69px;font-size:11px;font-weight:400;color:#616161;line-height:11px;letter-spacing:0.300px;left:986.20px;transform:translateX(-50%);">Aug 29</div>
<div class="t" style="top:831.69px;font-size:11px;font-weight:400;color:#616161;line-height:11px;letter-spacing:0.300px;left:1047.70px;transform:translateX(-50%);">Sep 10</div>
<div class="t" style="top:831.69px;font-size:11px;font-weight:400;color:#616161;line-height:11px;letter-spacing:0.300px;left:1109.20px;transform:translateX(-50%);">Sep 22</div>
<div class="t" style="top:831.69px;font-size:11px;font-weight:400;color:#616161;line-height:11px;letter-spacing:0.300px;left:1170.70px;transform:translateX(-50%);">Oct 4</div>
<div class="t" style="top:831.69px;font-size:11px;font-weight:400;color:#616161;line-height:11px;letter-spacing:0.300px;left:1232.20px;transform:translateX(-50%);">Oct 16</div>
<div class="t" style="top:831.69px;font-size:11px;font-weight:400;color:#616161;line-height:11px;letter-spacing:0.300px;left:1293.70px;transform:translateX(-50%);">Oct 28</div>
<svg class="abs" style="left:0;top:0" width="1919" height="954" viewBox="0 0 1919 954"><path d="M863.6 740.8 C864.2 743.4 865.8 753.6 866.8 756.5 C867.8 759.3 868.8 757.7 869.4 757.9 C870.1 758.2 870.3 758.1 870.7 758.1 C871.2 758.0 871.6 758.5 872.0 757.7 C872.5 757.0 872.9 754.4 873.4 753.7 C873.8 752.9 874.2 753.2 874.7 753.3 C875.1 753.5 875.4 751.8 876.0 754.4 C876.5 757.1 876.9 766.5 877.8 769.1 C878.7 771.6 880.4 769.7 881.2 769.8 C882.0 769.9 882.1 769.9 882.5 769.8 C882.9 769.8 883.3 770.5 883.8 769.3 C884.3 768.2 885.0 776.2 885.7 762.8 C886.4 749.4 887.1 699.1 888.0 688.9 C888.9 678.6 890.4 693.3 891.2 701.4 C891.9 709.6 891.7 725.8 892.7 737.6 C893.8 749.4 895.9 765.1 897.5 772.2 C899.0 779.3 900.7 778.5 902.2 780.1 C903.7 781.6 905.5 781.3 906.4 781.5 C907.3 781.8 907.2 781.8 907.7 781.6 C908.1 781.5 908.1 782.7 909.0 780.8 C909.8 778.8 911.8 771.9 912.7 769.9 C913.5 768.0 913.5 769.0 914.0 769.1 C914.4 769.1 914.5 767.4 915.3 770.3 C916.0 773.1 917.4 782.9 918.7 786.4 C919.9 789.8 922.0 790.0 922.9 790.7 C923.8 791.5 923.7 791.3 924.2 791.1 C924.6 790.9 924.9 792.8 925.5 789.6 C926.1 786.5 927.0 775.2 927.6 772.1 C928.2 768.9 928.5 770.8 928.9 770.6 C929.3 770.4 929.7 770.5 930.2 770.7 C930.7 771.0 931.1 769.1 932.0 772.2 C933.0 775.3 934.9 783.4 936.0 789.5 C937.1 795.5 938.0 805.1 938.6 808.5 C939.3 811.9 939.5 809.8 939.9 809.9 C940.3 810.1 940.7 810.7 941.2 809.4 C941.7 808.1 941.7 803.9 943.1 802.1 C944.4 800.2 947.6 802.1 949.3 798.1 C951.1 794.2 952.6 781.9 953.5 778.4 C954.5 774.9 954.4 777.1 954.8 776.9 C955.3 776.7 955.6 776.7 956.1 777.1 C956.7 777.6 957.7 779.4 958.3 779.8 C958.8 780.3 959.1 780.1 959.6 780.1 C960.0 780.0 960.2 780.9 960.9 779.4 C961.6 777.9 963.1 772.8 963.8 771.3 C964.5 769.8 964.6 770.7 965.1 770.6 C965.5 770.6 965.6 770.3 966.4 770.8 C967.1 771.4 968.4 772.5 969.8 773.8 C971.1 775.0 972.9 776.9 974.5 778.5 C976.1 780.1 977.6 781.4 979.2 783.2 C980.8 785.0 982.6 786.7 983.9 789.5 C985.3 792.3 986.6 797.9 987.3 799.7 C988.1 801.6 988.2 800.5 988.6 800.5 C989.1 800.5 989.4 801.3 989.9 800.0 C990.5 798.6 989.9 793.9 991.8 792.6 C993.7 791.4 998.6 794.7 1001.2 792.6 C1003.8 790.5 1005.4 782.4 1007.5 780.1 C1009.6 777.7 1012.6 784.3 1013.8 778.5 C1015.0 772.7 1013.9 750.2 1014.7 745.5 C1015.5 740.8 1017.6 745.7 1018.6 750.2 C1019.7 754.6 1019.8 770.4 1021.0 772.2 C1022.2 774.0 1024.5 763.6 1025.7 761.2 C1026.9 758.8 1027.4 751.5 1028.1 758.1 C1028.8 764.6 1029.4 792.9 1029.9 800.5 C1030.5 808.1 1030.8 803.8 1031.2 803.6 C1031.7 803.5 1031.9 809.0 1032.5 799.8 C1033.2 790.6 1034.4 758.4 1035.2 748.6 C1035.9 738.9 1036.5 742.6 1037.0 741.3 C1037.5 740.0 1037.9 740.7 1038.3 740.8 C1038.7 740.8 1038.7 739.4 1039.6 741.7 C1040.5 744.1 1042.8 746.9 1043.8 754.9 C1044.8 762.9 1045.1 783.7 1045.6 790.0 C1046.2 796.3 1046.5 792.3 1046.9 792.6 C1047.4 793.0 1047.5 793.1 1048.2 792.3 C1049.0 791.5 1050.4 790.6 1051.7 787.9 C1052.9 785.2 1055.0 778.3 1055.9 776.2 C1056.8 774.1 1056.7 775.5 1057.2 775.3 C1057.6 775.2 1057.4 775.2 1058.5 775.5 C1059.5 775.7 1062.2 773.8 1063.5 776.9 C1064.7 780.0 1064.7 790.1 1065.8 794.2 C1066.9 798.3 1069.1 800.2 1070.0 801.5 C1070.9 802.8 1070.9 802.4 1071.3 802.1 C1071.8 801.7 1071.8 805.3 1072.6 799.4 C1073.5 793.6 1075.5 772.8 1076.3 767.0 C1077.1 761.1 1077.2 764.4 1077.6 764.3 C1078.0 764.3 1078.3 761.5 1078.9 766.7 C1079.5 771.8 1080.5 789.9 1081.0 795.0 C1081.6 800.2 1081.9 797.1 1082.3 797.4 C1082.8 797.6 1082.8 798.3 1083.6 796.6 C1084.5 794.9 1086.5 788.8 1087.3 787.1 C1088.1 785.4 1088.2 786.4 1088.6 786.4 C1089.0 786.3 1089.1 785.8 1089.9 786.8 C1090.7 787.8 1092.8 791.2 1093.6 792.2 C1094.4 793.2 1094.5 792.6 1094.9 792.6 C1095.3 792.7 1095.3 792.8 1096.2 792.5 C1097.1 792.3 1099.1 795.8 1100.4 791.1 C1101.8 786.4 1103.0 769.8 1104.3 764.3 C1105.7 758.9 1107.6 759.5 1108.5 758.5 C1109.5 757.4 1109.4 758.0 1109.8 758.1 C1110.3 758.1 1110.1 756.7 1111.1 759.0 C1112.2 761.4 1114.9 766.8 1116.1 772.2 C1117.4 777.6 1118.1 787.8 1118.8 791.2 C1119.4 794.6 1119.6 792.6 1120.1 792.6 C1120.5 792.7 1120.7 794.2 1121.4 791.5 C1122.0 788.9 1122.9 780.3 1124.0 776.9 C1125.1 773.5 1127.3 772.1 1128.2 771.1 C1129.1 770.0 1129.1 770.3 1129.5 770.6 C1129.9 770.9 1130.2 767.8 1130.8 772.9 C1131.4 778.1 1132.3 796.2 1132.9 801.3 C1133.5 806.5 1133.8 803.6 1134.2 803.6 C1134.6 803.7 1134.9 805.9 1135.5 801.8 C1136.1 797.6 1137.1 782.9 1137.6 778.8 C1138.2 774.6 1138.5 777.2 1138.9 776.9 C1139.4 776.7 1139.6 776.3 1140.2 777.4 C1140.9 778.4 1141.8 778.8 1142.9 783.2 C1144.0 787.6 1144.9 799.8 1146.8 803.6 C1148.7 807.5 1152.7 806.0 1154.1 806.6 C1155.6 807.1 1155.0 807.2 1155.4 806.8 C1155.9 806.4 1156.1 810.1 1156.7 804.4 C1157.4 798.6 1158.1 779.8 1159.4 772.2 C1160.6 764.6 1163.3 761.4 1164.4 759.0 C1165.4 756.7 1165.2 758.1 1165.7 758.1 C1166.1 758.0 1166.0 757.4 1167.0 758.5 C1167.9 759.5 1170.2 760.2 1171.3 764.3 C1172.4 768.5 1172.9 778.0 1173.6 783.2 C1174.4 788.4 1175.0 797.8 1176.0 795.8 C1177.0 793.7 1178.6 775.4 1179.4 770.9 C1180.2 766.5 1180.3 769.1 1180.7 769.1 C1181.2 769.0 1181.5 767.2 1182.0 770.6 C1182.6 774.0 1183.6 786.1 1184.1 789.5 C1184.7 792.9 1185.0 790.9 1185.4 791.1 C1185.9 791.2 1186.0 792.0 1186.7 790.4 C1187.5 788.8 1188.8 786.8 1190.2 781.6 C1191.6 776.5 1194.1 763.6 1195.1 759.7 C1196.2 755.8 1196.0 758.1 1196.4 758.1 C1196.9 758.1 1197.0 756.0 1197.7 759.7 C1198.4 763.4 1199.9 776.3 1200.6 780.0 C1201.4 783.6 1201.5 781.5 1201.9 781.6 C1202.4 781.8 1202.7 782.6 1203.2 780.8 C1203.8 779.0 1204.8 772.5 1205.4 770.7 C1205.9 768.8 1206.2 769.9 1206.7 769.8 C1207.1 769.8 1207.3 769.4 1208.0 770.2 C1208.7 771.1 1210.2 774.1 1210.9 775.0 C1211.6 775.8 1211.7 775.3 1212.2 775.3 C1212.6 775.3 1212.9 775.8 1213.5 775.0 C1214.0 774.1 1215.0 771.1 1215.6 770.2 C1216.2 769.4 1216.5 769.7 1216.9 769.8 C1217.3 770.0 1217.7 768.4 1218.2 771.0 C1218.6 773.6 1219.1 782.6 1219.5 785.2 C1220.0 787.8 1220.4 786.2 1220.8 786.4 C1221.3 786.5 1221.6 787.0 1222.1 785.9 C1222.6 784.9 1223.1 789.4 1224.0 780.1 C1224.8 770.7 1226.3 737.6 1227.1 729.7 C1227.9 721.9 1228.0 722.4 1228.7 732.9 C1229.3 743.4 1230.4 780.1 1231.0 792.6 C1231.7 805.2 1231.5 807.7 1232.6 808.4 C1233.7 809.0 1236.6 798.8 1237.6 796.7 C1238.6 794.6 1238.5 795.7 1238.9 795.8 C1239.3 795.9 1239.9 794.0 1240.2 797.2 C1240.5 800.4 1240.4 811.6 1240.7 814.8 C1241.1 815.8 1241.6 815.8 1242.0 816.2 C1242.5 815.8 1242.6 815.8 1243.3 815.7 C1244.0 814.5 1245.5 810.1 1246.2 808.9 C1246.9 807.7 1247.1 808.4 1247.5 808.4 C1248.0 808.4 1248.1 807.7 1248.8 808.9 C1249.5 810.1 1251.0 814.5 1251.8 815.7 C1252.5 815.8 1252.6 815.8 1253.1 816.2 C1253.5 815.8 1253.5 815.8 1254.4 815.0 C1255.2 812.3 1257.2 802.8 1258.0 800.1 C1258.9 797.5 1258.9 799.1 1259.3 798.9 C1259.8 798.8 1259.6 798.5 1260.6 799.3 C1261.7 800.0 1264.4 801.2 1265.6 803.6 C1266.9 806.1 1267.6 812.0 1268.3 813.9 C1268.9 815.7 1269.1 814.6 1269.6 814.7 C1270.0 814.7 1270.2 815.1 1270.9 814.3 C1271.6 813.6 1273.1 811.0 1273.8 810.3 C1274.5 809.5 1274.6 810.0 1275.1 809.9 C1275.5 809.9 1275.8 809.7 1276.4 810.2 C1276.9 810.6 1277.9 812.4 1278.5 812.9 C1279.0 813.3 1279.3 813.2 1279.8 813.1 C1280.2 813.0 1280.4 814.2 1281.1 812.2 C1281.8 810.3 1283.3 803.3 1284.0 801.4 C1284.7 799.4 1284.8 800.6 1285.3 800.5 C1285.7 800.4 1285.7 800.2 1286.6 800.7 C1287.5 801.2 1288.8 802.4 1290.8 803.6 C1292.8 804.9 1296.3 807.6 1298.6 808.4 C1301.0 809.2 1302.7 809.9 1304.9 808.4 C1307.2 806.8 1310.3 801.3 1312.0 798.9 C1313.7 796.6 1314.6 795.0 1315.2 794.2" stroke="#86b4cc" stroke-width="1.8" fill="none" stroke-dasharray="0.1 3.5" stroke-linecap="round"/><path d="M863.6 792.6 C864.2 790.0 866.3 779.4 867.1 776.6 C867.9 773.7 867.9 775.3 868.4 775.3 C868.8 775.4 868.9 773.1 869.7 776.9 C870.5 780.7 871.0 794.5 873.1 798.1 C875.1 801.8 880.3 798.7 882.0 798.9 C883.7 799.0 882.9 799.0 883.3 798.9 C883.7 798.9 883.8 799.5 884.6 798.5 C885.4 797.4 886.7 794.5 888.0 792.6 C889.3 790.8 891.3 788.4 892.2 787.5 C893.1 786.6 893.1 786.9 893.5 787.1 C894.0 787.4 894.1 784.7 894.8 789.2 C895.5 793.7 897.0 809.7 897.7 814.2 C898.4 815.8 898.6 815.8 899.0 816.2 C899.5 815.8 899.5 815.8 900.3 815.0 C901.1 812.1 902.5 805.3 903.7 798.9 C905.0 792.6 907.0 780.9 907.9 777.0 C908.9 773.1 908.8 775.6 909.2 775.3 C909.7 775.1 909.8 774.8 910.5 775.7 C911.3 776.6 912.6 778.0 914.0 780.8 C915.3 783.7 917.2 788.8 918.7 792.6 C920.2 796.4 922.0 801.6 922.9 803.6 C923.8 805.6 923.7 804.4 924.2 804.4 C924.6 804.4 924.9 805.4 925.5 803.6 C926.1 801.8 927.0 795.3 927.6 793.5 C928.2 791.6 928.5 792.8 928.9 792.6 C929.3 792.5 929.2 792.6 930.2 792.7 C931.2 792.8 933.8 792.5 935.2 793.4 C936.6 794.4 937.8 797.6 938.6 798.5 C939.4 799.5 939.5 798.9 939.9 798.9 C940.3 799.0 940.3 799.0 941.2 798.9 C942.1 798.7 944.1 800.9 945.4 798.1 C946.7 795.3 948.0 784.9 948.8 782.1 C949.6 779.2 949.7 780.9 950.1 780.8 C950.6 780.8 950.9 779.8 951.4 781.7 C952.0 783.5 953.0 790.0 953.5 791.8 C954.1 793.6 954.4 792.6 954.8 792.6 C955.3 792.7 955.6 793.1 956.1 792.3 C956.7 791.4 957.7 788.4 958.3 787.5 C958.8 786.7 959.1 787.1 959.6 787.1 C960.0 787.1 960.0 786.7 960.9 787.5 C961.7 788.4 963.7 791.4 964.5 792.3 C965.4 793.1 965.4 792.7 965.8 792.6 C966.3 792.6 966.4 793.8 967.1 791.8 C967.9 789.9 969.3 791.6 970.6 780.8 C971.8 770.1 973.9 737.0 974.8 727.5 C975.7 717.9 975.6 723.5 976.1 723.5 C976.5 723.4 976.6 718.0 977.4 727.4 C978.2 736.9 979.5 766.7 980.8 780.1 C982.1 793.5 984.1 802.9 985.0 807.8 C985.9 812.8 985.9 809.7 986.3 809.9 C986.7 810.2 986.8 810.5 987.6 809.6 C988.4 808.6 988.6 805.3 991.0 804.4 C993.4 803.6 999.4 806.5 1002.0 804.4 C1004.6 802.3 1005.2 795.7 1006.7 791.9 C1008.3 788.1 1010.5 783.1 1011.4 781.6 C1012.4 780.2 1011.6 779.8 1012.4 783.2 C1013.1 786.6 1015.0 798.8 1015.8 802.2 C1016.6 805.6 1016.6 803.7 1017.1 803.6 C1017.5 803.6 1017.7 806.1 1018.4 801.7 C1019.0 797.3 1020.3 781.7 1021.0 777.3 C1021.6 772.9 1021.8 775.5 1022.3 775.3 C1022.7 775.1 1022.9 774.3 1023.6 776.1 C1024.3 778.0 1024.8 784.5 1026.5 786.4 C1028.2 788.2 1032.0 783.5 1033.6 787.1 C1035.2 790.8 1035.6 804.5 1036.2 808.3 C1036.9 812.1 1037.1 809.8 1037.5 809.9 C1037.9 810.1 1038.0 811.1 1038.8 809.1 C1039.6 807.1 1041.0 803.5 1042.2 798.1 C1043.5 792.8 1045.5 780.7 1046.4 776.9 C1047.4 773.1 1047.3 775.2 1047.7 775.3 C1048.2 775.5 1048.2 772.1 1049.0 777.7 C1049.8 783.3 1050.8 803.9 1052.5 809.2 C1054.1 814.4 1057.1 811.7 1058.7 809.2 C1060.4 806.6 1061.4 796.5 1062.2 793.8 C1062.9 791.0 1063.0 792.7 1063.5 792.6 C1063.9 792.6 1064.0 791.6 1064.8 793.4 C1065.5 795.2 1066.8 801.0 1068.2 803.6 C1069.5 806.3 1071.4 807.1 1072.9 809.2 C1074.4 811.2 1076.2 814.6 1077.1 815.7 C1078.0 815.8 1078.0 815.8 1078.4 816.2 C1078.8 815.8 1079.1 815.8 1079.7 813.4 C1080.3 807.0 1081.2 784.5 1081.8 778.2 C1082.4 771.9 1082.7 775.7 1083.1 775.3 C1083.5 775.0 1083.4 774.7 1084.4 775.8 C1085.5 777.0 1088.0 776.2 1089.4 782.4 C1090.8 788.6 1092.0 807.6 1092.8 813.1 C1093.6 815.8 1093.7 815.2 1094.1 815.4 C1094.6 815.7 1094.8 815.8 1095.4 814.7 C1096.0 813.0 1097.0 806.9 1097.5 805.2 C1098.1 803.5 1098.4 804.4 1098.8 804.4 C1099.3 804.4 1099.4 803.5 1100.1 805.2 C1100.8 806.9 1102.3 813.0 1103.0 814.7 C1103.7 815.8 1103.9 815.6 1104.3 815.4 C1104.8 815.3 1104.9 815.8 1105.6 813.8 C1106.3 810.3 1107.8 797.8 1108.5 794.2 C1109.2 790.7 1109.4 792.8 1109.8 792.6 C1110.3 792.5 1110.4 791.6 1111.1 793.4 C1111.9 795.2 1113.3 801.0 1114.6 803.6 C1115.8 806.3 1117.8 808.4 1118.8 809.5 C1119.7 810.5 1119.6 810.2 1120.1 809.9 C1120.5 809.7 1120.8 812.4 1121.4 807.9 C1121.9 803.4 1122.9 787.4 1123.5 782.9 C1124.0 778.4 1124.3 781.0 1124.8 780.8 C1125.2 780.7 1125.3 779.1 1126.1 782.1 C1126.9 785.1 1128.1 793.4 1129.5 798.9 C1130.9 804.5 1132.4 812.7 1134.2 815.4 C1136.0 815.8 1138.9 815.8 1140.5 815.4 C1142.1 811.9 1143.1 798.0 1143.9 794.2 C1144.7 790.4 1144.8 792.8 1145.2 792.6 C1145.7 792.5 1145.7 791.6 1146.5 793.4 C1147.3 795.2 1148.7 801.1 1149.9 803.6 C1151.2 806.2 1153.2 807.8 1154.1 808.8 C1155.1 809.7 1155.0 809.2 1155.4 809.2 C1155.9 809.1 1156.0 810.0 1156.7 808.4 C1157.4 806.9 1158.9 801.2 1159.6 799.6 C1160.3 798.1 1160.5 799.0 1160.9 798.9 C1161.4 798.9 1161.5 798.5 1162.2 799.3 C1162.9 800.0 1164.4 802.6 1165.1 803.3 C1165.8 804.0 1166.0 803.6 1166.4 803.6 C1166.9 803.6 1167.1 804.1 1167.7 803.3 C1168.4 802.5 1169.4 801.5 1170.5 798.9 C1171.6 796.4 1173.5 789.9 1174.4 788.0 C1175.3 786.0 1175.3 787.1 1175.7 787.1 C1176.1 787.2 1176.2 785.5 1177.0 788.3 C1177.8 791.0 1179.1 801.1 1180.7 803.6 C1182.4 806.2 1185.4 805.4 1187.0 803.6 C1188.6 801.9 1189.6 795.2 1190.4 793.4 C1191.2 791.6 1191.3 792.6 1191.7 792.6 C1192.2 792.7 1192.5 791.6 1193.0 793.5 C1193.6 795.3 1194.6 801.8 1195.1 803.6 C1195.7 805.4 1196.0 804.5 1196.4 804.4 C1196.9 804.4 1197.0 805.9 1197.7 803.2 C1198.4 800.5 1199.9 791.0 1200.6 788.3 C1201.4 785.7 1201.5 787.3 1201.9 787.1 C1202.4 787.0 1202.3 786.5 1203.2 787.6 C1204.2 788.8 1206.2 790.7 1207.5 794.2 C1208.7 797.7 1210.1 806.2 1210.9 808.8 C1211.7 811.5 1211.7 809.9 1212.2 809.9 C1212.6 810.0 1212.7 811.0 1213.5 809.2 C1214.3 807.3 1215.4 801.7 1216.9 798.9 C1218.4 796.2 1220.4 793.7 1222.4 792.6 C1224.4 791.6 1227.2 790.8 1228.7 792.6 C1230.2 794.5 1230.7 801.6 1231.3 803.6 C1232.0 805.6 1232.2 804.4 1232.6 804.4 C1233.0 804.4 1233.1 805.6 1233.9 803.6 C1234.7 801.6 1235.7 794.5 1237.3 792.6 C1238.9 790.8 1241.8 791.6 1243.6 792.6 C1245.5 793.7 1247.0 796.2 1248.3 798.9 C1249.7 801.7 1251.0 807.3 1251.8 809.2 C1252.5 811.0 1252.6 809.9 1253.1 809.9 C1253.5 809.9 1253.6 810.9 1254.4 809.2 C1255.1 807.5 1256.6 801.4 1257.3 799.7 C1258.0 798.0 1258.1 799.0 1258.6 798.9 C1259.0 798.9 1258.9 798.5 1259.9 799.3 C1260.8 800.0 1262.9 801.9 1264.1 803.6 C1265.2 805.4 1266.0 808.4 1266.7 809.5 C1267.3 810.5 1267.6 810.4 1268.0 809.9 C1268.4 809.5 1268.6 813.9 1269.3 806.7 C1270.0 799.5 1271.5 774.0 1272.2 766.8 C1272.9 759.6 1273.1 763.6 1273.5 763.6 C1273.9 763.6 1274.1 759.6 1274.8 766.8 C1275.5 774.0 1277.0 799.5 1277.7 806.7 C1278.4 813.9 1278.6 809.5 1279.0 809.9 C1279.4 810.4 1279.5 810.5 1280.3 809.6 C1281.1 808.6 1282.2 805.3 1283.7 804.4 C1285.2 803.6 1287.7 805.3 1289.2 804.4 C1290.7 803.6 1291.8 800.2 1292.6 799.3 C1293.4 798.4 1293.5 798.9 1293.9 798.9 C1294.4 798.9 1294.7 798.5 1295.2 799.3 C1295.8 800.2 1296.8 803.2 1297.3 804.0 C1297.9 804.9 1298.2 804.7 1298.6 804.4 C1299.1 804.2 1299.2 807.2 1299.9 802.4 C1300.7 797.5 1302.0 782.5 1303.4 775.3 C1304.7 768.2 1307.0 762.1 1308.0 759.3 C1309.0 756.4 1308.9 758.1 1309.3 758.1 C1309.8 758.0 1309.9 756.5 1310.6 759.2 C1311.3 762.0 1312.7 771.3 1313.6 774.6 C1314.5 777.8 1315.0 771.5 1315.9 778.5 C1316.9 785.4 1318.6 809.9 1319.1 816.2" stroke="#4a9dc9" stroke-width="2" fill="none" stroke-linejoin="round"/></svg>
<div class="abs" style="left:940.8px;top:873.2px;width:13px;height:2px;background:#3f8fb8;border-radius:1px"></div>
<div class="t" style="top:868.69px;font-size:11px;font-weight:400;color:#616161;line-height:11px;letter-spacing:0.350px;left:961.10px;">Aug 5–Nov 2, 2024</div>
<div class="abs" style="left:1079.6px;top:873.2px;width:13px;height:1.5px;background-image:linear-gradient(to right,#86b4cc 45%,transparent 45%);background-size:4.4px 1.5px"></div>
<div class="t" style="top:868.69px;font-size:11px;font-weight:400;color:#616161;line-height:11px;letter-spacing:0.350px;left:1099.90px;">May 7–Aug 4, 2024</div>
<div class="card" style="left:1355px;top:548px;width:530px;height:354px"></div>
<div class="t" style="top:565.00px;font-size:13px;font-weight:400;color:#303030;line-height:13px;-webkit-text-stroke:0.3px #303030;letter-spacing:0.445px;left:1371.20px;">Average order value</div>
<div class="abs" style="left:1371.0px;top:579.5px;width:125.3px;height:1.5px;background-image:linear-gradient(to right,#b8b8b8 40%,transparent 40%);background-size:4px 1.5px"></div>
<div class="t" style="top:596.42px;font-size:21px;font-weight:700;color:#303030;line-height:21px;letter-spacing:0.240px;left:1371.50px;">€100.39</div>
<svg class="abs" style="left:1458.0px;top:603.7px" width="7" height="7" viewBox="0 0 7 7"><path d="M1 1 L5.6 5.6 M5.8 2.2 L5.8 5.8 L2.2 5.8" stroke="#4a4a4a" stroke-width="1.6" fill="none"/></svg>
<div class="t" style="top:603.17px;font-size:11.5px;font-weight:700;color:#616161;line-height:11.5px;letter-spacing:0.200px;left:1467.50px;">0.7%</div>
<div class="abs" style="left:1424.5px;top:642.3px;width:439.5px;height:1px;background:#efefef"></div>
<div class="t" style="top:636.89px;font-size:11px;font-weight:400;color:#616161;line-height:11px;letter-spacing:0.600px;left:1373.30px;">€600</div>
<div class="abs" style="left:1424.5px;top:700.0px;width:439.5px;height:1px;background:#efefef"></div>
<div class="t" style="top:694.59px;font-size:11px;font-weight:400;color:#616161;line-height:11px;letter-spacing:0.600px;left:1373.30px;">€400</div>
<div class="abs" style="left:1424.5px;top:757.7px;width:439.5px;height:1px;background:#efefef"></div>
<div class="t" style="top:752.29px;font-size:11px;font-weight:400;color:#616161;line-height:11px;letter-spacing:0.600px;left:1373.30px;">€200</div>
<div class="abs" style="left:1424.5px;top:815.3px;width:439.5px;height:1px;background:#efefef"></div>
<div class="t" style="top:809.89px;font-size:11px;font-weight:400;color:#616161;line-height:11px;letter-spacing:0.600px;left:1373.30px;">€0</div>
<div class="t" style="top:831.69px;font-size:11px;font-weight:400;color:#616161;line-height:11px;letter-spacing:0.300px;left:1424.90px;transform:translateX(-50%);">Aug 5</div>
<div class="t" style="top:831.69px;font-size:11px;font-weight:400;color:#616161;line-height:11px;letter-spacing:0.300px;left:1489.08px;transform:translateX(-50%);">Aug 18</div>
<div class="t" style="top:831.69px;font-size:11px;font-weight:400;color:#616161;line-height:11px;letter-spacing:0.300px;left:1553.26px;transform:translateX(-50%);">Aug 31</div>
<div class="t" style="top:831.69px;font-size:11px;font-weight:400;color:#616161;line-height:11px;letter-spacing:0.300px;left:1617.44px;transform:translateX(-50%);">Sep 13</div>
<div class="t" style="top:831.69px;font-size:11px;font-weight:400;color:#616161;line-height:11px;letter-spacing:0.300px;left:1681.62px;transform:translateX(-50%);">Sep 26</div>
<div class="t" style="top:831.69px;font-size:11px;font-weight:400;color:#616161;line-height:11px;letter-spacing:0.300px;left:1745.81px;transform:translateX(-50%);">Oct 9</div>
<div class="t" style="top:831.69px;font-size:11px;font-weight:400;color:#616161;line-height:11px;letter-spacing:0.300px;left:1809.99px;transform:translateX(-50%);">Oct 22</div>
<svg class="abs" style="left:0;top:0" width="1919" height="954" viewBox="0 0 1919 954"><path d="M1425.2 780.1 C1425.5 783.2 1426.5 795.7 1427.1 799.1 C1427.6 802.5 1427.9 800.3 1428.4 800.5 C1428.8 800.7 1428.7 800.8 1429.7 800.3 C1430.6 799.8 1432.5 802.0 1433.9 797.4 C1435.2 792.7 1436.8 777.0 1437.8 772.2 C1438.8 767.4 1439.1 769.2 1439.6 768.5 C1440.2 767.9 1440.5 768.2 1440.9 768.3 C1441.4 768.4 1441.3 767.1 1442.2 769.1 C1443.2 771.1 1445.0 777.7 1446.4 780.1 C1447.9 782.4 1449.5 780.8 1451.2 783.2 C1452.9 785.6 1455.4 791.2 1456.7 794.2 C1457.9 797.3 1458.0 800.2 1458.5 801.5 C1459.0 802.8 1459.4 802.1 1459.8 802.1 C1460.2 802.1 1460.5 802.7 1461.1 801.6 C1461.8 800.6 1462.9 797.0 1463.7 795.8 C1464.6 794.6 1465.7 794.6 1466.4 794.3 C1467.0 794.1 1467.2 794.2 1467.7 794.2 C1468.1 794.3 1467.5 793.8 1469.0 794.5 C1470.5 795.3 1475.1 797.9 1476.6 798.6 C1478.1 799.3 1477.5 798.9 1477.9 798.9 C1478.3 798.9 1477.9 799.2 1479.2 798.7 C1480.5 798.2 1483.9 798.1 1485.8 795.8 C1487.6 793.5 1489.4 801.6 1490.5 784.8 C1491.5 768.0 1491.4 712.5 1492.0 695.2 C1492.6 677.9 1493.4 681.0 1494.1 681.0 C1494.7 681.0 1495.4 678.1 1496.0 695.2 C1496.6 712.2 1496.6 765.5 1497.5 783.2 C1498.5 800.9 1500.8 798.2 1501.8 801.5 C1502.7 804.8 1502.6 802.7 1503.1 802.9 C1503.5 803.0 1503.6 803.5 1504.4 802.4 C1505.1 801.2 1506.9 799.1 1507.8 795.8 C1508.6 792.5 1509.1 785.0 1509.6 782.6 C1510.1 780.3 1510.5 781.7 1510.9 781.6 C1511.3 781.6 1511.2 780.9 1512.2 782.2 C1513.3 783.5 1515.3 787.5 1517.2 789.5 C1519.1 791.5 1521.1 793.4 1523.5 794.2 C1525.8 795.0 1529.2 795.7 1531.4 794.2 C1533.5 792.8 1535.3 787.0 1536.3 785.4 C1537.4 783.9 1537.2 784.8 1537.6 784.8 C1538.1 784.8 1538.4 783.7 1538.9 785.6 C1539.5 787.4 1540.2 792.1 1540.8 795.8 C1541.4 799.4 1542.1 805.4 1542.6 807.5 C1543.2 809.6 1543.5 808.3 1543.9 808.4 C1544.4 808.4 1544.2 809.1 1545.2 807.8 C1546.3 806.5 1548.4 805.4 1550.2 800.5 C1552.0 795.6 1554.8 782.5 1556.0 778.6 C1557.2 774.6 1556.9 777.1 1557.3 776.9 C1557.7 776.7 1557.9 776.3 1558.6 777.4 C1559.3 778.4 1560.0 780.4 1561.2 783.2 C1562.5 786.0 1564.1 791.6 1565.9 794.2 C1567.8 796.8 1570.8 798.1 1572.2 798.9 C1573.7 799.7 1573.7 801.1 1574.7 798.9 C1575.7 796.7 1577.3 788.1 1578.1 785.8 C1578.9 783.4 1579.0 784.8 1579.4 784.8 C1579.9 784.8 1579.8 783.7 1580.7 785.7 C1581.7 787.6 1584.2 794.5 1585.2 796.5 C1586.2 798.4 1586.1 797.4 1586.5 797.4 C1586.9 797.3 1587.0 798.7 1587.8 796.3 C1588.6 793.8 1590.7 785.2 1591.5 782.7 C1592.3 780.3 1592.4 781.8 1592.8 781.6 C1593.2 781.5 1592.9 781.5 1594.1 781.7 C1595.3 782.0 1598.6 780.6 1599.9 783.2 C1601.1 785.8 1601.2 794.6 1601.7 797.1 C1602.2 799.6 1602.6 798.0 1603.0 798.1 C1603.5 798.3 1603.5 798.5 1604.3 797.9 C1605.1 797.2 1606.4 795.9 1607.7 794.2 C1609.1 792.6 1611.4 789.5 1612.5 787.9 C1613.5 786.4 1613.8 785.5 1614.3 785.0 C1614.8 784.5 1615.2 784.6 1615.6 784.8 C1616.0 784.9 1616.2 783.4 1616.9 785.9 C1617.6 788.3 1619.1 797.0 1619.8 799.4 C1620.5 801.8 1620.7 800.4 1621.1 800.5 C1621.5 800.6 1621.9 801.3 1622.4 800.0 C1622.9 798.6 1623.4 799.5 1624.2 792.6 C1625.1 785.8 1626.5 763.6 1627.4 758.8 C1628.3 754.1 1629.1 759.2 1629.7 764.3 C1630.4 769.4 1630.0 785.3 1631.3 789.5 C1632.6 793.7 1635.7 788.8 1637.6 789.5 C1639.5 790.2 1641.6 793.1 1642.6 793.9 C1643.6 794.7 1643.5 794.3 1643.9 794.2 C1644.3 794.2 1644.4 794.9 1645.2 793.7 C1646.0 792.4 1648.1 788.1 1648.9 786.9 C1649.7 785.7 1649.8 786.4 1650.2 786.4 C1650.6 786.3 1650.7 785.9 1651.5 786.7 C1652.3 787.5 1654.0 789.4 1654.9 791.1 C1655.8 792.8 1656.2 795.9 1656.8 796.9 C1657.3 798.0 1657.6 797.4 1658.1 797.4 C1658.5 797.3 1658.5 798.0 1659.4 796.8 C1660.2 795.6 1662.2 791.3 1663.0 790.0 C1663.9 788.8 1663.9 789.5 1664.3 789.5 C1664.8 789.5 1664.6 788.9 1665.6 789.9 C1666.7 791.0 1668.7 794.6 1670.6 795.8 C1672.6 797.0 1675.9 797.0 1677.2 797.2 C1678.5 797.5 1678.1 797.4 1678.5 797.4 C1678.9 797.3 1678.5 798.0 1679.8 796.9 C1681.1 795.9 1683.9 794.9 1686.4 791.1 C1688.8 787.2 1692.4 779.5 1694.2 773.8 C1696.0 768.0 1696.4 755.4 1697.4 756.5 C1698.3 757.5 1699.0 772.7 1699.7 780.1 C1700.4 787.4 1701.0 796.9 1701.6 800.5 C1702.1 804.2 1702.4 801.9 1702.9 802.1 C1703.3 802.2 1703.2 802.8 1704.2 801.5 C1705.1 800.2 1706.6 797.8 1708.4 794.2 C1710.1 790.6 1712.8 783.4 1714.7 780.1 C1716.5 776.7 1718.6 775.3 1719.6 774.2 C1720.7 773.2 1720.5 773.7 1720.9 773.8 C1721.4 773.9 1721.5 772.3 1722.2 774.9 C1723.0 777.5 1724.2 786.8 1725.7 789.5 C1727.2 792.2 1730.1 790.7 1731.3 791.0 C1732.4 791.2 1732.1 791.1 1732.6 791.1 C1733.0 791.0 1733.0 791.5 1733.9 790.7 C1734.8 790.0 1737.0 790.8 1738.1 786.4 C1739.2 782.0 1739.3 768.8 1740.4 764.3 C1741.6 759.9 1743.3 760.4 1745.2 759.6 C1747.0 758.8 1749.9 756.7 1751.4 759.6 C1753.0 762.5 1752.9 773.2 1754.6 776.9 C1756.3 780.6 1759.8 779.1 1761.7 781.6 C1763.5 784.1 1765.0 790.0 1765.9 791.9 C1766.8 793.7 1766.7 792.5 1767.2 792.6 C1767.6 792.7 1767.7 792.9 1768.5 792.4 C1769.3 791.9 1770.8 792.3 1771.9 789.5 C1773.0 786.7 1773.7 778.2 1775.0 775.3 C1776.4 772.5 1779.0 772.9 1780.0 772.4 C1781.1 771.9 1780.9 772.1 1781.3 772.2 C1781.8 772.3 1781.8 771.1 1782.6 773.0 C1783.4 774.8 1785.2 777.1 1786.0 783.2 C1786.9 789.3 1787.4 804.8 1787.9 809.5 C1788.4 814.2 1788.7 811.3 1789.2 811.5 C1789.6 811.7 1789.9 812.3 1790.5 810.8 C1791.1 809.4 1792.0 804.2 1792.6 802.7 C1793.2 801.3 1793.5 802.0 1793.9 802.1 C1794.3 802.1 1794.6 801.0 1795.2 803.0 C1795.8 804.9 1796.7 811.8 1797.3 813.8 C1797.9 815.7 1798.2 814.6 1798.6 814.7 C1799.0 814.7 1799.3 815.6 1799.9 814.0 C1800.6 812.4 1801.6 810.1 1802.5 805.2 C1803.5 800.4 1804.7 791.2 1805.7 784.8 C1806.7 778.3 1807.7 769.8 1808.3 766.5 C1809.0 763.2 1809.2 765.3 1809.6 765.1 C1810.1 765.0 1810.4 764.6 1810.9 765.5 C1811.4 766.4 1812.3 766.6 1812.8 770.6 C1813.2 774.6 1812.8 783.7 1813.6 789.5 C1814.3 795.3 1816.0 801.1 1817.5 805.2 C1819.0 809.3 1821.4 812.4 1822.5 814.0 C1823.5 815.6 1823.3 814.7 1823.8 814.7 C1824.2 814.6 1824.3 815.8 1825.1 813.8 C1825.9 811.7 1827.1 805.9 1828.5 802.1 C1829.8 798.3 1831.8 792.9 1833.2 791.1 C1834.6 789.2 1835.5 788.4 1837.1 791.1 C1838.8 793.8 1841.7 804.3 1842.9 807.2 C1844.1 810.0 1843.8 808.2 1844.2 808.4 C1844.6 808.5 1844.8 808.8 1845.5 808.0 C1846.2 807.3 1847.7 804.7 1848.4 804.0 C1849.1 803.2 1849.3 803.7 1849.7 803.6 C1850.2 803.6 1850.3 803.5 1851.0 803.8 C1851.7 804.0 1853.2 804.9 1853.9 805.1 C1854.6 805.4 1854.8 805.4 1855.2 805.2 C1855.7 805.1 1856.0 806.7 1856.5 804.1 C1857.0 801.5 1857.6 792.3 1858.4 789.5 C1859.1 786.7 1860.7 787.5 1861.2 787.1" stroke="#86b4cc" stroke-width="1.8" fill="none" stroke-dasharray="0.1 3.5" stroke-linecap="round"/><path d="M1425.2 790.3 C1425.8 791.5 1427.9 796.3 1428.6 797.6 C1429.4 798.9 1429.5 798.1 1429.9 798.1 C1430.4 798.2 1430.6 798.8 1431.2 797.6 C1431.9 796.5 1432.5 792.2 1433.9 791.1 C1435.2 790.0 1437.8 793.8 1439.4 791.1 C1440.9 788.4 1442.4 777.9 1443.3 775.0 C1444.1 772.1 1444.1 773.7 1444.6 773.8 C1445.0 773.8 1445.2 771.6 1445.9 775.3 C1446.6 779.0 1447.3 791.7 1448.8 795.8 C1450.3 799.9 1453.5 796.5 1455.1 799.7 C1456.7 802.9 1457.7 812.3 1458.5 815.1 C1459.3 815.8 1459.4 815.8 1459.8 816.2 C1460.2 815.7 1460.5 815.8 1461.1 812.2 C1461.7 803.3 1462.7 771.7 1463.2 762.9 C1463.8 754.0 1464.1 759.1 1464.5 758.8 C1465.0 758.6 1465.2 755.4 1465.8 761.3 C1466.5 767.2 1466.4 788.5 1468.5 794.2 C1470.5 799.9 1476.3 795.4 1478.2 795.7 C1480.0 795.9 1479.0 795.9 1479.5 795.8 C1479.9 795.6 1480.2 797.0 1480.8 794.8 C1481.3 792.6 1482.3 784.8 1482.9 782.6 C1483.5 780.4 1483.7 781.6 1484.2 781.6 C1484.6 781.7 1484.9 780.2 1485.5 782.8 C1486.1 785.3 1487.0 794.4 1487.6 797.0 C1488.2 799.5 1488.5 798.0 1488.9 798.1 C1489.3 798.2 1489.4 798.9 1490.2 797.6 C1491.0 796.3 1492.3 792.3 1493.6 790.3 C1495.0 788.3 1496.8 789.2 1498.3 785.6 C1499.8 782.0 1501.6 771.8 1502.5 768.8 C1503.5 765.7 1503.4 767.5 1503.8 767.5 C1504.3 767.5 1504.4 765.7 1505.1 768.8 C1505.9 771.9 1507.3 782.0 1508.6 786.4 C1509.8 790.7 1511.8 793.6 1512.8 795.1 C1513.7 796.7 1513.6 795.8 1514.1 795.8 C1514.5 795.8 1514.8 796.8 1515.4 795.0 C1515.9 793.1 1516.9 786.6 1517.5 784.8 C1518.0 783.0 1518.3 784.0 1518.8 784.0 C1519.2 784.0 1519.5 782.8 1520.1 785.0 C1520.6 787.2 1521.6 795.0 1522.2 797.2 C1522.8 799.3 1523.1 798.2 1523.5 798.1 C1523.9 798.1 1524.0 799.7 1524.8 797.0 C1525.6 794.4 1526.9 786.0 1528.2 782.4 C1529.5 778.9 1531.5 777.0 1532.4 775.8 C1533.3 774.7 1533.3 775.2 1533.7 775.3 C1534.1 775.5 1534.2 773.2 1535.0 776.9 C1535.8 780.6 1537.2 792.6 1538.4 797.4 C1539.7 802.1 1541.7 804.0 1542.6 805.4 C1543.5 806.8 1543.5 806.4 1543.9 806.0 C1544.4 805.6 1544.7 809.9 1545.2 802.8 C1545.8 795.7 1546.8 770.7 1547.3 763.6 C1547.9 756.5 1548.2 760.6 1548.6 760.4 C1549.1 760.3 1549.2 757.3 1549.9 762.7 C1550.7 768.0 1552.2 785.8 1553.4 792.6 C1554.5 799.5 1556.0 801.6 1556.8 803.6 C1557.6 805.6 1557.6 804.5 1558.1 804.4 C1558.5 804.4 1558.6 805.8 1559.4 803.4 C1560.2 801.1 1561.3 793.0 1562.8 790.3 C1564.3 787.6 1566.8 791.7 1568.3 787.1 C1569.8 782.6 1570.9 767.3 1571.7 763.0 C1572.5 758.7 1572.6 761.2 1573.0 761.2 C1573.5 761.2 1573.6 758.5 1574.3 763.2 C1575.0 767.9 1575.9 783.8 1577.1 789.5 C1578.2 795.2 1580.4 796.1 1581.3 797.5 C1582.2 799.0 1582.1 798.2 1582.6 798.1 C1583.0 798.1 1583.0 799.2 1583.9 797.4 C1584.8 795.5 1586.8 793.6 1588.1 787.1 C1589.4 780.7 1590.7 763.7 1591.5 758.6 C1592.3 753.5 1592.4 756.6 1592.8 756.5 C1593.2 756.4 1593.4 754.2 1594.1 758.1 C1594.8 762.1 1595.6 775.1 1596.7 780.1 C1597.9 785.1 1600.0 786.7 1600.9 788.1 C1601.8 789.5 1601.8 789.1 1602.2 788.7 C1602.7 788.3 1602.8 792.4 1603.5 785.7 C1604.2 779.0 1605.7 755.2 1606.4 748.5 C1607.1 741.8 1607.3 745.3 1607.7 745.5 C1608.2 745.6 1608.5 740.7 1609.0 749.4 C1609.6 758.2 1610.6 789.3 1611.2 798.1 C1611.7 806.9 1612.0 801.6 1612.5 802.1 C1612.9 802.5 1613.2 803.7 1613.8 800.7 C1614.3 797.7 1615.3 786.8 1615.9 783.8 C1616.4 780.8 1616.7 782.5 1617.2 782.4 C1617.6 782.3 1617.8 781.5 1618.5 783.1 C1619.1 784.7 1619.5 789.5 1621.1 791.9 C1622.7 794.2 1626.4 793.6 1628.2 797.4 C1629.9 801.1 1630.8 811.2 1631.6 814.2 C1632.4 815.8 1632.5 815.6 1632.9 815.4 C1633.3 815.3 1633.5 815.8 1634.2 813.5 C1634.8 808.7 1635.7 792.0 1636.8 787.1 C1638.0 782.3 1640.1 784.7 1641.0 784.2 C1641.9 783.7 1641.9 783.7 1642.3 784.0 C1642.8 784.3 1643.1 781.3 1643.6 786.2 C1644.2 791.1 1645.2 808.4 1645.7 813.2 C1646.3 815.8 1646.6 815.4 1647.0 815.4 C1647.5 815.5 1647.8 815.8 1648.3 813.7 C1648.9 810.0 1649.9 796.6 1650.5 792.8 C1651.0 789.0 1651.3 791.1 1651.8 791.1 C1652.2 791.1 1652.4 789.0 1653.1 792.8 C1653.8 796.6 1655.3 810.0 1656.0 813.7 C1656.7 815.8 1656.8 815.5 1657.3 815.4 C1657.7 815.4 1658.0 815.8 1658.6 813.3 C1659.1 808.5 1660.1 791.7 1660.7 786.9 C1661.3 782.2 1661.5 785.1 1662.0 784.8 C1662.4 784.5 1662.5 784.2 1663.3 785.2 C1664.1 786.3 1665.6 788.4 1666.7 791.1 C1667.8 793.8 1669.3 799.5 1670.1 801.3 C1670.9 803.1 1671.0 802.2 1671.4 802.1 C1671.8 802.0 1672.0 803.9 1672.7 800.6 C1673.4 797.3 1674.9 785.6 1675.6 782.3 C1676.3 779.0 1676.5 781.0 1676.9 780.8 C1677.4 780.7 1677.3 779.9 1678.2 781.6 C1679.1 783.3 1681.1 785.4 1682.4 791.1 C1683.8 796.7 1684.6 811.4 1686.4 815.4 C1688.1 815.8 1691.0 815.8 1692.6 815.4 C1694.3 810.1 1695.3 789.0 1696.1 783.3 C1696.8 777.5 1696.9 781.2 1697.4 780.8 C1697.8 780.5 1697.7 780.5 1698.7 781.1 C1699.6 781.6 1701.2 783.2 1702.9 784.0 C1704.5 784.7 1707.0 784.5 1708.4 785.6 C1709.7 786.7 1710.3 789.8 1711.0 790.7 C1711.7 791.6 1711.9 791.1 1712.3 791.1 C1712.7 791.0 1713.2 791.9 1713.6 790.4 C1714.0 788.9 1714.5 783.8 1714.9 782.3 C1715.4 780.8 1715.8 781.6 1716.2 781.6 C1716.7 781.7 1717.0 780.7 1717.5 782.4 C1718.1 784.1 1719.1 790.2 1719.6 791.9 C1720.2 793.6 1720.5 792.8 1720.9 792.6 C1721.4 792.4 1721.5 795.0 1722.2 790.7 C1722.9 786.5 1724.4 771.3 1725.1 767.1 C1725.8 762.8 1726.0 765.1 1726.4 765.1 C1726.9 765.1 1727.1 762.5 1727.7 767.1 C1728.4 771.6 1728.8 788.1 1730.2 792.6 C1731.7 797.2 1734.9 793.1 1736.5 794.2 C1738.1 795.3 1739.1 798.4 1739.9 799.3 C1740.7 800.2 1740.8 800.2 1741.2 799.7 C1741.7 799.3 1742.0 803.5 1742.5 796.6 C1743.1 789.8 1744.1 765.6 1744.6 758.8 C1745.2 751.9 1745.5 755.7 1745.9 755.7 C1746.4 755.6 1746.5 752.4 1747.2 758.4 C1747.9 764.5 1749.4 786.2 1750.1 792.2 C1750.8 798.3 1751.0 794.7 1751.4 795.0 C1751.9 795.3 1752.1 796.0 1752.7 794.3 C1753.4 792.6 1754.0 787.2 1755.4 784.8 C1756.7 782.4 1759.3 781.1 1760.9 780.1 C1762.5 779.0 1764.2 778.9 1765.1 778.6 C1766.0 778.3 1766.0 778.5 1766.4 778.5 C1766.8 778.5 1767.2 778.2 1767.7 778.8 C1768.1 779.4 1768.6 781.5 1769.0 782.1 C1769.5 782.8 1769.9 782.5 1770.3 782.4 C1770.7 782.3 1770.9 783.3 1771.6 781.7 C1772.3 780.1 1773.8 774.5 1774.5 772.9 C1775.2 771.3 1775.4 772.0 1775.8 772.2 C1776.3 772.4 1776.5 769.5 1777.1 774.4 C1777.7 779.3 1778.7 796.6 1779.2 801.4 C1779.8 806.3 1780.1 803.5 1780.5 803.6 C1781.0 803.8 1781.3 805.1 1781.8 802.5 C1782.4 799.9 1783.4 790.9 1784.0 788.3 C1784.5 785.7 1784.8 787.3 1785.3 787.1 C1785.7 787.0 1786.0 786.7 1786.6 787.5 C1787.1 788.2 1788.1 790.8 1788.7 791.5 C1789.2 792.3 1789.5 791.9 1790.0 791.9 C1790.4 791.8 1790.6 792.4 1791.3 791.4 C1792.0 790.4 1793.5 787.0 1794.2 786.0 C1794.9 785.0 1795.0 785.4 1795.5 785.6 C1795.9 785.7 1796.2 784.0 1796.8 786.8 C1797.3 789.6 1798.3 799.6 1798.9 802.4 C1799.5 805.2 1799.8 803.8 1800.2 803.6 C1800.6 803.5 1800.8 806.4 1801.5 801.4 C1802.2 796.4 1803.7 778.7 1804.4 773.7 C1805.1 768.7 1805.3 771.6 1805.7 771.4 C1806.1 771.2 1806.2 769.7 1807.0 772.7 C1807.8 775.7 1809.3 782.9 1810.4 789.5 C1811.5 796.1 1813.0 808.1 1813.8 812.2 C1814.6 815.8 1814.7 813.9 1815.1 813.9 C1815.6 813.8 1815.6 815.8 1816.4 811.9 C1817.2 807.4 1818.6 792.8 1819.8 786.4 C1821.1 779.9 1823.1 775.6 1824.0 773.2 C1825.0 770.8 1824.9 772.0 1825.3 772.2 C1825.8 772.4 1826.2 769.9 1826.6 774.1 C1827.1 778.4 1827.5 793.5 1828.0 797.8 C1828.4 802.1 1828.8 799.4 1829.3 799.7 C1829.7 800.0 1829.9 800.0 1830.6 799.5 C1831.3 799.0 1832.8 797.3 1833.5 796.8 C1834.2 796.3 1834.3 796.5 1834.8 796.6 C1835.2 796.6 1835.4 796.0 1836.1 797.1 C1836.8 798.2 1838.3 802.1 1839.0 803.2 C1839.7 804.2 1839.8 804.0 1840.3 803.6 C1840.7 803.3 1841.0 806.9 1841.6 801.0 C1842.2 795.2 1843.1 774.4 1843.7 768.6 C1844.3 762.7 1844.6 766.3 1845.0 765.9 C1845.4 765.6 1845.6 765.2 1846.3 766.5 C1847.0 767.8 1847.6 770.5 1848.9 773.8 C1850.3 777.1 1852.7 783.5 1854.4 786.4 C1856.1 789.2 1857.6 786.2 1859.2 791.1 C1860.7 795.9 1863.1 811.4 1863.9 815.4" stroke="#4a9dc9" stroke-width="2" fill="none" stroke-linejoin="round"/></svg>
<div class="abs" style="left:1485.8px;top:873.2px;width:13px;height:2px;background:#3f8fb8;border-radius:1px"></div>
<div class="t" style="top:868.69px;font-size:11px;font-weight:400;color:#616161;line-height:11px;letter-spacing:0.350px;left:1506.10px;">Aug 5–Nov 2, 2024</div>
<div class="abs" style="left:1624.6px;top:873.2px;width:13px;height:1.5px;background-image:linear-gradient(to right,#86b4cc 45%,transparent 45%);background-size:4.4px 1.5px"></div>
<div class="t" style="top:868.69px;font-size:11px;font-weight:400;color:#616161;line-height:11px;letter-spacing:0.350px;left:1644.90px;">May 7–Aug 4, 2024</div>
<div class="card" style="left:264px;top:918px;width:530px;height:354px"></div>
<div class="t" style="top:935.00px;font-size:13px;font-weight:400;color:#303030;line-height:13px;-webkit-text-stroke:0.3px #303030;letter-spacing:0.605px;left:280.20px;">Top selling products</div>
<div class="abs" style="left:280.0px;top:949.5px;width:127px;height:1.5px;background-image:linear-gradient(to right,#b8b8b8 40%,transparent 40%);background-size:4px 1.5px"></div>
<div class="card" style="left:810px;top:918px;width:529px;height:354px"></div>
<div class="t" style="top:935.00px;font-size:13px;font-weight:400;color:#303030;line-height:13px;-webkit-text-stroke:0.3px #303030;letter-spacing:0.555px;left:826.20px;">Customer cohort analysis</div>
<div class="abs" style="left:826.0px;top:949.5px;width:160px;height:1.5px;background-image:linear-gradient(to right,#b8b8b8 40%,transparent 40%);background-size:4px 1.5px"></div>
<div class="card" style="left:1355px;top:918px;width:530px;height:354px"></div>
<div class="t" style="top:935.00px;font-size:13px;font-weight:400;color:#303030;line-height:13px;-webkit-text-stroke:0.3px #303030;letter-spacing:0.546px;left:1371.20px;">Returning customer rate</div>
<div class="abs" style="left:1371.0px;top:949.5px;width:152px;height:1.5px;background-image:linear-gradient(to right,#b8b8b8 40%,transparent 40%);background-size:4px 1.5px"></div>
<svg class="abs" style="left:1910px;top:58px" width="9" height="8" viewBox="0 0 9 8"><path d="M1.5 6 L4.5 2.5 L7.5 6 Z" fill="#b8b8b8"/></svg>
<div class="abs" style="left:1911px;top:68px;width:6.5px;height:246px;background:#b3b3b3"></div>
<svg class="abs" style="left:1909px;top:935px" width="9" height="8" viewBox="0 0 9 8"><path d="M1.5 2 L4.5 5.5 L7.5 2 Z" fill="#b8b8b8"/></svg>
<div class="abs" style="left:1586px;top:845px;width:208px;height:88px;background:#f8f8f8;border-radius:8px;box-shadow:0 0 0 1px rgba(0,0,0,.06),0 6px 14px rgba(0,0,0,.16)"></div>
<div class="abs" style="left:1711px;top:850px;width:37px;height:38px;background:#fdfdfd;border-radius:4px;box-shadow:0 0 0 1px rgba(0,0,0,.04),0 1px 2px rgba(0,0,0,.05)"></div>
<svg class="abs" style="left:1601px;top:860px" width="18" height="18" viewBox="0 0 18 18"><path d="M9 1.2 C14.5 1.2,16.8 3.5,16.8 9 C16.8 14.5,14.5 16.8,9 16.8 C3.5 16.8,1.2 14.5,1.2 9 C1.2 3.5,3.5 1.2,9 1.2 Z" fill="#5aa524"/><path d="M5.3 9.2 L7.9 11.6 L12.6 6.6" stroke="#fff" stroke-width="2" fill="none" stroke-linecap="round" stroke-linejoin="round"/></svg>
<svg class="abs" style="left:1640px;top:859px" width="20" height="19" viewBox="0 0 20 19"><defs><linearGradient id="vg" x1="0" y1="0" x2="1" y2="1"><stop offset="0" stop-color="#3a3a48"/><stop offset="1" stop-color="#9a9aa8"/></linearGradient></defs><path d="M1.5 5 L6.5 4 L9 12 L12.5 5.5 L14 9 L8.5 17.5 Z" fill="url(#vg)"/><circle cx="15" cy="4.5" r="4.2" fill="#d8343f"/><path d="M13.5 3 L16.5 6 M16.5 3 L13.5 6" stroke="#fff" stroke-width="1.2"/></svg>
<svg class="abs" style="left:1681px;top:861px" width="17" height="17" viewBox="0 0 17 17"><g stroke="#555" stroke-width="1.1" fill="none"><rect x="4.6" y="1.2" width="3" height="14.6" rx="1.5"/><rect x="9.4" y="1.2" width="3" height="14.6" rx="1.5"/><rect x="1.2" y="4.6" width="14.6" height="3" rx="1.5"/><rect x="1.2" y="9.4" width="14.6" height="3" rx="1.5"/></g></svg>
<svg class="abs" style="left:1721px;top:860px" width="18" height="18" viewBox="0 0 18 18"><path d="M1.5 16.5 C4 10,9 4,16 1.5 C15 6,11.5 12,4 14.5 Z" fill="#9a6fd6"/><path d="M2 16 C6 11,10 7,14 3" stroke="#c7a9f0" stroke-width="0.8" fill="none"/></svg>
<svg class="abs" style="left:1762px;top:860px" width="16" height="18" viewBox="0 0 16 18"><path d="M2 6 C2 3,5 1.5,8 1.5 C11 1.5,14 3,14 6 L12.5 6.5 L12.5 16.5 C12.5 17,12 17.2,11.5 17.2 L4.5 17.2 C4 17.2,3.5 17,3.5 16.5 L3.5 6.5 Z" fill="#2b2b2b"/><path d="M3 4.5 C5 3,11 3,13 4.5" stroke="#888" stroke-width="0.8" fill="none"/><path d="M6 9 L6 14.5 M10 9 L10 14.5 M6 11.8 L10 11.8" stroke="#bbb" stroke-width="1.2"/></svg>
<svg class="abs" style="left:1601px;top:900px" width="19" height="18" viewBox="0 0 19 18"><path d="M8 1 L14.5 3 L14.5 8.5 C14.5 12.5,11.5 15,8 16.5 C4.5 15,1.5 12.5,1.5 8.5 L1.5 3 Z" fill="#1f7ed0"/><path d="M8 1 L14.5 3 L14.5 8 L8 8 Z" fill="#5cb4f0"/><path d="M12.5 9 L18 17.5 L7 17.5 Z" fill="#f3c623"/><path d="M12.5 12 L12.5 14.8 M12.5 16 L12.5 16.5" stroke="#222" stroke-width="1.1"/></svg>
<svg class="abs" style="left:1643px;top:900px" width="14" height="18" viewBox="0 0 14 18"><ellipse cx="7" cy="9" rx="6.3" ry="8.3" fill="#1b74d8"/><path d="M3.8 6.2 L10 11.6 L7 14.3 L7 3.7 L10 6.4 L3.8 11.8" stroke="#fff" stroke-width="1.2" fill="none" stroke-linejoin="round"/></svg>
<div class="abs" style="left:0;top:946px;width:1919px;height:8px;background:#deeaf8;border-top:1px solid #b3bbc5"></div>
<div class="abs" style="left:32.5px;top:950.5px;width:11px;height:11px;border-radius:6px;background:#a82e2e"></div>
<div class="abs" style="left:943px;top:950px;width:40px;height:10px;border-radius:4px;background:#e8a8a8"></div>
</body></html>
